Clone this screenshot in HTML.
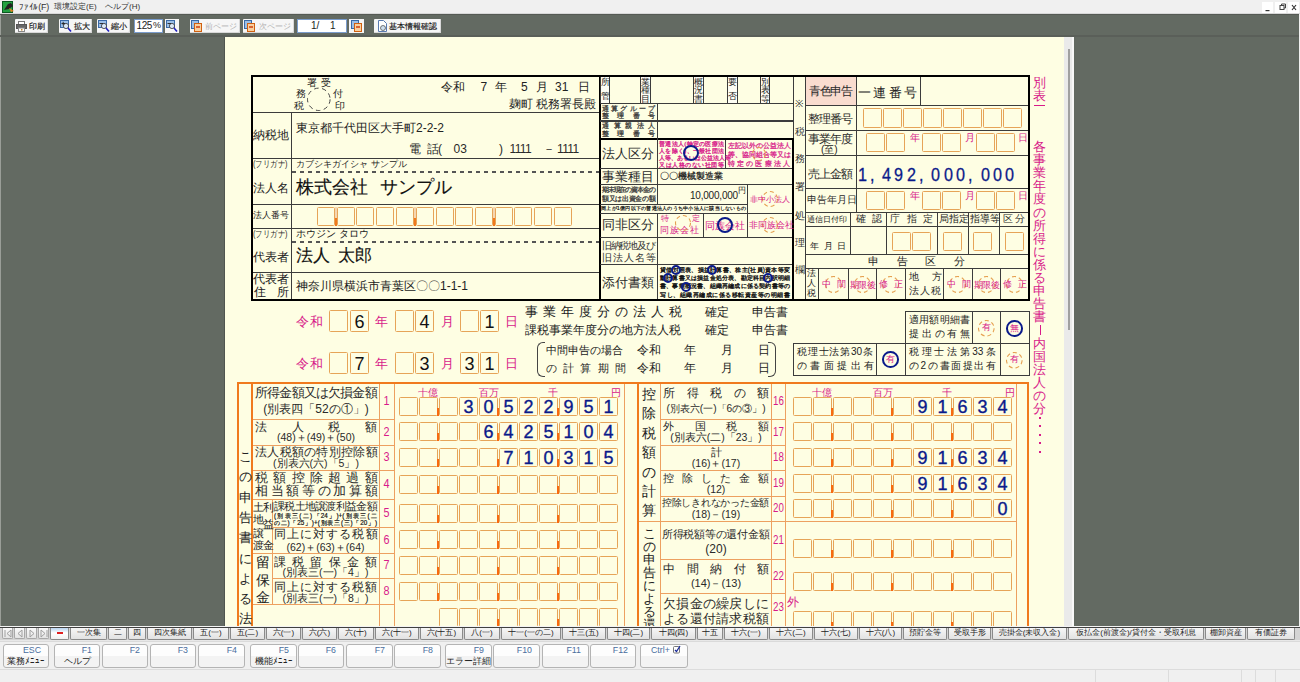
<!DOCTYPE html><html><head><meta charset="utf-8"><style>
html,body{margin:0;padding:0;width:1300px;height:682px;overflow:hidden;background:#f0f0f0;position:relative}
div,span{position:absolute;box-sizing:border-box}
span{font-family:"Liberation Sans",sans-serif;white-space:nowrap;line-height:1}
</style></head><body>
<div style="left:0px;top:0px;width:1300px;height:14px;background:#f0f0f0"></div>
<div style="left:0px;top:14px;width:1300px;height:612px;background:#636a62"></div>
<div style="left:1299px;top:14px;width:1px;height:612px;background:#f0f0f0"></div>
<div style="left:0px;top:14px;width:1px;height:612px;background:#9a9e98"></div>
<svg style="position:absolute;left:2px;top:1px" width="13" height="12" viewBox="0 0 13 12"><rect x="0.5" y="0.5" width="10" height="11" fill="#22a040" stroke="#0a5a20"/><path d="M2 9 L6 3 L9 2 L11 5 L7 8 Z" fill="#222"/><path d="M7 7 L12 10 L9 11 Z" fill="#e08020"/></svg>
<span style="left:19px;top:2.5px;font-size:9px;color:#333;letter-spacing:-0.2px">ﾌｧｲﾙ(F)</span>
<span style="left:54px;top:2.5px;font-size:8px;color:#333;">環境設定(E)</span>
<span style="left:105px;top:2.5px;font-size:8px;color:#333;">ヘルプ(H)</span>
<div style="left:0px;top:13px;width:1300px;height:1px;background:#d8d8d8"></div>
<div style="left:0px;top:14px;width:1299px;height:1px;background:#555a54"></div>
<div style="left:0px;top:35px;width:1299px;height:2px;background:#5a5f59"></div>
<div style="left:1262px;top:2px;width:11px;height:11px;background:#fff"></div>
<div style="left:1275px;top:2px;width:11px;height:11px;background:#fff"></div>
<div style="left:1288px;top:2px;width:11px;height:11px;background:#fff"></div>
<svg style="position:absolute;left:1262px;top:2px" width="37" height="11" viewBox="0 0 37 11"><rect x="3.5" y="8" width="4" height="1.2" fill="#333"/><rect x="18" y="3.5" width="4" height="4" fill="none" stroke="#444" stroke-width="1"/><path d="M19.5 3.5 V2 H23.5 V6 H22" fill="none" stroke="#444" stroke-width="1"/><path d="M30 3 L34 8 M34 3 L30 8" stroke="#333" stroke-width="1.2"/></svg>
<div style="left:15px;top:19px;width:33px;height:14px;background:#f6f6f6;border-radius:1px;box-shadow:inset -1px -1px 0 #d8d8d8"></div>
<svg style="position:absolute;left:16px;top:21px" width="11" height="11" viewBox="0 0 11 11"><rect x="2.5" y="0.5" width="6" height="3" fill="#fff" stroke="#777"/><rect x="0.5" y="3.5" width="10" height="4" fill="#666" stroke="#555"/><rect x="2.5" y="7" width="6" height="3.5" fill="#fff" stroke="#888"/><rect x="5" y="8" width="1.5" height="1.5" fill="#c08020"/></svg>
<span style="left:29px;top:22px;font-size:8.4px;color:#111;-webkit-text-stroke:0.15px #111">印刷</span>
<div style="left:59px;top:19px;width:33px;height:14px;background:#f6f6f6;border-radius:1px;box-shadow:inset -1px -1px 0 #d8d8d8"></div>
<svg style="position:absolute;left:60px;top:20px" width="12" height="12" viewBox="0 0 12 12"><rect x="0.5" y="0.5" width="8" height="7" fill="#9cc0e8" stroke="#3a6aa8"/><circle cx="6" cy="6" r="2.6" fill="#dbe9f8" stroke="#333" stroke-width="0.8"/><path d="M8 8 L11 11.5" stroke="#2020c0" stroke-width="1.6"/><path d="M1.5 3.5 H5 M3.2 1.8 V5.2" stroke="#222" stroke-width="0.9"/></svg>
<span style="left:74px;top:22px;font-size:8.4px;color:#111;-webkit-text-stroke:0.15px #111">拡大</span>
<div style="left:97px;top:19px;width:33px;height:14px;background:#f6f6f6;border-radius:1px;box-shadow:inset -1px -1px 0 #d8d8d8"></div>
<svg style="position:absolute;left:98px;top:20px" width="12" height="12" viewBox="0 0 12 12"><rect x="0.5" y="0.5" width="8" height="7" fill="#9cc0e8" stroke="#3a6aa8"/><circle cx="6" cy="6" r="2.6" fill="#dbe9f8" stroke="#333" stroke-width="0.8"/><path d="M8 8 L11 11.5" stroke="#2020c0" stroke-width="1.6"/><path d="M1.5 3.5 H5" stroke="#222" stroke-width="0.9"/></svg>
<span style="left:111px;top:22px;font-size:8.4px;color:#111;-webkit-text-stroke:0.15px #111">縮小</span>
<div style="left:134px;top:19px;width:29px;height:14px;background:#fff;box-shadow:inset 0 0 0 1px #7a9ccc"></div>
<span style="left:136.5px;top:21px;font-size:10px;color:#222;letter-spacing:-0.4px">125</span>
<span style="left:153px;top:21px;font-size:9px;color:#222;">%</span>
<div style="left:165px;top:19px;width:14px;height:14px;background:#f6f6f6"></div>
<svg style="position:absolute;left:166px;top:20px" width="12" height="12" viewBox="0 0 12 12"><rect x="0.5" y="0.5" width="8" height="7" fill="#9cc0e8" stroke="#3a6aa8"/><circle cx="6" cy="6" r="2.6" fill="#dbe9f8" stroke="#333" stroke-width="0.8"/><path d="M8 8 L11 11.5" stroke="#2020c0" stroke-width="1.6"/><path d="M1.5 3.5 H5" stroke="#222" stroke-width="0.9"/></svg>
<div style="left:190px;top:19px;width:50px;height:14px;background:#f6f6f6;border-radius:1px;box-shadow:inset -1px -1px 0 #d8d8d8"></div>
<svg style="position:absolute;left:191px;top:20px" width="12" height="12" viewBox="0 0 12 12"><rect x="0.5" y="0.5" width="7" height="8" fill="#9cc0e8" stroke="#3a6aa8"/><rect x="3.5" y="3.5" width="7" height="8" fill="#f8d0a0" stroke="#d06010"/><path d="M5 7 H9" stroke="#d04010" stroke-width="1.5"/></svg>
<span style="left:205px;top:22px;font-size:8.4px;color:#b0b0b0;">前ページ</span>
<div style="left:243px;top:19px;width:51px;height:14px;background:#f6f6f6;border-radius:1px;box-shadow:inset -1px -1px 0 #d8d8d8"></div>
<svg style="position:absolute;left:244px;top:20px" width="12" height="12" viewBox="0 0 12 12"><rect x="0.5" y="0.5" width="7" height="8" fill="#9cc0e8" stroke="#3a6aa8"/><rect x="3.5" y="3.5" width="7" height="8" fill="#f8d0a0" stroke="#d06010"/><path d="M5 7 H9" stroke="#d04010" stroke-width="1.5"/></svg>
<span style="left:259px;top:22px;font-size:8.4px;color:#b0b0b0;">次ページ</span>
<div style="left:297px;top:19px;width:50px;height:14px;background:#fff;box-shadow:inset 0 0 0 1px #7a9ccc"></div>
<span style="left:311px;top:21px;font-size:10px;color:#222;">1/</span>
<span style="left:330px;top:21px;font-size:10px;color:#222;">1</span>
<div style="left:349px;top:19px;width:15px;height:14px;background:#f6f6f6"></div>
<svg style="position:absolute;left:351px;top:20px" width="12" height="12" viewBox="0 0 12 12"><rect x="0.5" y="0.5" width="7" height="8" fill="#9cc0e8" stroke="#3a6aa8"/><rect x="3.5" y="3.5" width="7" height="8" fill="#f8d0a0" stroke="#d06010"/><path d="M5 7 H9" stroke="#d04010" stroke-width="1.5"/></svg>
<div style="left:374px;top:19px;width:67px;height:14px;background:#f6f6f6;border-radius:1px;box-shadow:inset -1px -1px 0 #d8d8d8"></div>
<svg style="position:absolute;left:377px;top:20px" width="11" height="12" viewBox="0 0 11 12"><path d="M1.5 0.5 H6.5 L9.5 3.5 V11.5 H1.5 Z" fill="#fff" stroke="#5a7ab0"/><circle cx="6" cy="8" r="2.5" fill="#cfe0f0" stroke="#444" stroke-width="0.7"/></svg>
<span style="left:389px;top:22px;font-size:8.4px;color:#111;-webkit-text-stroke:0.15px #111">基本情報確認</span>
<div style="left:224px;top:37px;width:1px;height:589px;background:#50554f"></div>
<div style="left:225px;top:37px;width:839px;height:589px;background:#fefee3"></div>
<div style="left:1064px;top:37px;width:10px;height:589px;background:#eaeaea"></div>
<div style="left:1072px;top:37px;width:2px;height:589px;background:#f8f8f8"></div>
<div style="left:1068px;top:49px;width:2px;height:281px;background:#a0a0a0"></div>
<div style="left:251px;top:75px;width:350px;height:226px;border:2px solid #000"></div>
<svg style="position:absolute;left:306px;top:87px" width="26" height="25"><ellipse cx="12.8" cy="12.3" rx="11.3" ry="11.2" fill="none" stroke="#444" stroke-width="1" stroke-dasharray="4.5 3.5"/></svg>
<span style="left:306.5px;top:77.5px;font-size:9.5px;color:#222;">署</span>
<span style="left:321px;top:77.5px;font-size:9.5px;color:#222;">受</span>
<span style="left:296px;top:88.5px;font-size:9.5px;color:#222;">務</span>
<span style="left:332.5px;top:88.5px;font-size:9.5px;color:#222;">付</span>
<span style="left:294px;top:100.5px;font-size:9.5px;color:#222;">税</span>
<span style="left:334.5px;top:100.5px;font-size:9.5px;color:#222;">印</span>
<span style="left:441px;top:81px;font-size:12px;color:#222;">令和</span>
<span style="left:480.5px;top:81px;font-size:12px;color:#222;">7</span>
<span style="left:494.5px;top:81px;font-size:12px;color:#222;">年</span>
<span style="left:521px;top:81px;font-size:12px;color:#222;">5</span>
<span style="left:535.5px;top:81px;font-size:12px;color:#222;">月</span>
<span style="left:555px;top:81px;font-size:12px;color:#222;">31</span>
<span style="left:578px;top:81px;font-size:12px;color:#222;">日</span>
<span style="right:704px;top:98px;font-size:12px;color:#2a2a2a;">麹町&nbsp;税務署長殿</span>
<div style="left:253px;top:112px;width:346px;height:1px;background:#3c3c3c"></div>
<div style="left:291px;top:112px;width:1px;height:187px;background:#3c3c3c"></div>
<span style="left:253px;top:129px;font-size:12px;color:#222;">納税地</span>
<span style="left:296px;top:122px;font-size:12px;color:#222;">東京都千代田区大手町2-2-2</span>
<span style="left:409px;top:143px;font-size:12px;color:#2a2a2a;">電</span>
<span style="left:427px;top:143px;font-size:12px;color:#2a2a2a;">話</span>
<span style="left:438px;top:143px;font-size:12px;color:#2a2a2a;">(</span>
<span style="left:453.5px;top:143px;font-size:12px;color:#2a2a2a;">03</span>
<span style="left:499px;top:143px;font-size:12px;color:#2a2a2a;">)</span>
<span style="left:509.5px;top:143px;font-size:12px;color:#2a2a2a;letter-spacing:-0.6px">1111</span>
<span style="left:543px;top:143px;font-size:12px;color:#2a2a2a;">－</span>
<span style="left:557px;top:143px;font-size:12px;color:#2a2a2a;letter-spacing:-0.6px">1111</span>
<div style="left:253px;top:158px;width:346px;height:1px;background:#3c3c3c"></div>
<span style="left:253px;top:160px;font-size:9px;color:#2a2a2a;transform:scaleX(0.82);transform-origin:0 0">(フリガナ)</span>
<span style="left:296px;top:160px;font-size:9.2px;color:#222;">カブシキガイシャ&nbsp;サンプル</span>
<div style="left:292px;top:171px;width:307px;height:1.5px;background:repeating-linear-gradient(90deg,#555 0 4px,transparent 4px 8px)"></div>
<span style="left:253px;top:182px;font-size:12px;color:#222;">法人名</span>
<span style="left:296px;top:178px;font-size:18px;color:#111;-webkit-text-stroke:0.15px #111">株式会社</span>
<span style="left:380px;top:178px;font-size:18px;color:#111;-webkit-text-stroke:0.15px #111">サンプル</span>
<div style="left:253px;top:204px;width:346px;height:1px;background:#3c3c3c"></div>
<span style="left:253px;top:210.5px;font-size:9.3px;color:#222;">法人番号</span>
<div style="left:317px;top:207px;width:18px;height:19px;border:1.2px solid #e6a458;border-radius:1.5px"></div>
<div style="left:337px;top:207px;width:18px;height:19px;border:1.2px solid #e6a458;border-radius:1.5px"></div>
<div style="left:356px;top:207px;width:18px;height:19px;border:1.2px solid #e6a458;border-radius:1.5px"></div>
<div style="left:376px;top:207px;width:18px;height:19px;border:1.2px solid #e6a458;border-radius:1.5px"></div>
<div style="left:396px;top:207px;width:18px;height:19px;border:1.2px solid #e6a458;border-radius:1.5px"></div>
<div style="left:416px;top:207px;width:18px;height:19px;border:1.2px solid #e6a458;border-radius:1.5px"></div>
<div style="left:436px;top:207px;width:18px;height:19px;border:1.2px solid #e6a458;border-radius:1.5px"></div>
<div style="left:455px;top:207px;width:18px;height:19px;border:1.2px solid #e6a458;border-radius:1.5px"></div>
<div style="left:475px;top:207px;width:18px;height:19px;border:1.2px solid #e6a458;border-radius:1.5px"></div>
<div style="left:495px;top:207px;width:18px;height:19px;border:1.2px solid #e6a458;border-radius:1.5px"></div>
<div style="left:514px;top:207px;width:18px;height:19px;border:1.2px solid #e6a458;border-radius:1.5px"></div>
<div style="left:534px;top:207px;width:18px;height:19px;border:1.2px solid #e6a458;border-radius:1.5px"></div>
<div style="left:554px;top:207px;width:18px;height:19px;border:1.2px solid #e6a458;border-radius:1.5px"></div>
<div style="left:335px;top:207px;width:2px;height:19px;background:#f5d6b0"></div>
<div style="left:335px;top:218px;width:2px;height:8px;background:#f07a1e"></div>
<div style="left:414px;top:207px;width:2px;height:19px;background:#f5d6b0"></div>
<div style="left:414px;top:218px;width:2px;height:8px;background:#f07a1e"></div>
<div style="left:493px;top:207px;width:2px;height:19px;background:#f5d6b0"></div>
<div style="left:493px;top:218px;width:2px;height:8px;background:#f07a1e"></div>
<div style="left:253px;top:228px;width:346px;height:1px;background:#3c3c3c"></div>
<span style="left:253px;top:229.5px;font-size:9px;color:#2a2a2a;transform:scaleX(0.82);transform-origin:0 0">(フリガナ)</span>
<span style="left:296px;top:229px;font-size:9.5px;color:#222;">ホウジン&nbsp;タロウ</span>
<div style="left:292px;top:241px;width:307px;height:1.5px;background:repeating-linear-gradient(90deg,#555 0 4px,transparent 4px 8px)"></div>
<span style="left:253px;top:251px;font-size:12px;color:#222;">代表者</span>
<span style="left:296px;top:247px;font-size:17px;color:#111;-webkit-text-stroke:0.15px #111">法人</span>
<span style="left:338px;top:247px;font-size:17px;color:#111;-webkit-text-stroke:0.15px #111">太郎</span>
<div style="left:253px;top:272px;width:346px;height:1px;background:#3c3c3c"></div>
<span style="left:253px;top:273px;font-size:12px;color:#222;">代表者</span>
<span style="left:254px;top:286px;font-size:12px;color:#222;">住</span>
<span style="left:277px;top:286px;font-size:12px;color:#222;">所</span>
<span style="left:296px;top:280px;font-size:12px;color:#222;">神奈川県横浜市青葉区〇〇1-1-1</span>
<div style="left:600px;top:77px;width:10px;height:26px;background:#fdfdf4;border-left:1px solid #3c3c3c;border-right:1px solid #3c3c3c"></div>
<span style="left:601px;top:78px;font-size:9px;color:#222;">所</span>
<span style="left:601px;top:92px;font-size:9px;color:#222;">管</span>
<div style="left:640px;top:77px;width:11px;height:26px;background:#fdfdf4;border-left:1px solid #3c3c3c;border-right:1px solid #3c3c3c"></div>
<span style="left:641px;top:78.0px;font-size:9px;color:#222;">業</span>
<span style="left:641px;top:86.3px;font-size:9px;color:#222;">種</span>
<span style="left:641px;top:94.6px;font-size:9px;color:#222;">目</span>
<div style="left:693px;top:77px;width:11px;height:26px;background:#fdfdf4;border-left:1px solid #3c3c3c;border-right:1px solid #3c3c3c"></div>
<span style="left:694px;top:78.0px;font-size:9px;color:#222;">概</span>
<span style="left:694px;top:86.3px;font-size:9px;color:#222;">況</span>
<span style="left:694px;top:94.6px;font-size:9px;color:#222;">書</span>
<div style="left:727px;top:77px;width:11px;height:26px;background:#fdfdf4;border-left:1px solid #3c3c3c;border-right:1px solid #3c3c3c"></div>
<span style="left:728px;top:78px;font-size:9px;color:#222;">要</span>
<span style="left:728px;top:92px;font-size:9px;color:#222;">否</span>
<div style="left:760px;top:77px;width:10px;height:26px;background:#fdfdf4;border-left:1px solid #3c3c3c;border-right:1px solid #3c3c3c"></div>
<span style="left:761px;top:78.0px;font-size:9px;color:#222;">別</span>
<span style="left:761px;top:86.3px;font-size:9px;color:#222;">表</span>
<span style="left:761px;top:94.6px;font-size:9px;color:#222;">等</span>
<div style="left:600px;top:103px;width:193px;height:1px;background:#3c3c3c"></div>
<div style="left:657px;top:103px;width:1px;height:35px;background:#3c3c3c"></div>
<div style="left:600px;top:120px;width:193px;height:2px;background:#3c3c3c"></div>
<div style="left:600px;top:138px;width:193px;height:2px;background:#000"></div>
<span style="left:602.0px;top:105px;font-size:7px;color:#333;;-webkit-text-stroke:0.25px #333">通</span>
<span style="left:611.2px;top:105px;font-size:7px;color:#333;;-webkit-text-stroke:0.25px #333">算</span>
<span style="left:620.4px;top:105px;font-size:7px;color:#333;;-webkit-text-stroke:0.25px #333">グ</span>
<span style="left:629.6px;top:105px;font-size:7px;color:#333;;-webkit-text-stroke:0.25px #333">ル</span>
<span style="left:638.8px;top:105px;font-size:7px;color:#333;;-webkit-text-stroke:0.25px #333">ー</span>
<span style="left:648.0px;top:105px;font-size:7px;color:#333;;-webkit-text-stroke:0.25px #333">プ</span>
<span style="left:602.0px;top:112px;font-size:7px;color:#333;;-webkit-text-stroke:0.25px #333">整</span>
<span style="left:617.3px;top:112px;font-size:7px;color:#333;;-webkit-text-stroke:0.25px #333">理</span>
<span style="left:632.7px;top:112px;font-size:7px;color:#333;;-webkit-text-stroke:0.25px #333">番</span>
<span style="left:648.0px;top:112px;font-size:7px;color:#333;;-webkit-text-stroke:0.25px #333">号</span>
<span style="left:602.0px;top:122px;font-size:7px;color:#333;;-webkit-text-stroke:0.25px #333">通</span>
<span style="left:613.5px;top:122px;font-size:7px;color:#333;;-webkit-text-stroke:0.25px #333">算</span>
<span style="left:625.0px;top:122px;font-size:7px;color:#333;;-webkit-text-stroke:0.25px #333">親</span>
<span style="left:636.5px;top:122px;font-size:7px;color:#333;;-webkit-text-stroke:0.25px #333">法</span>
<span style="left:648.0px;top:122px;font-size:7px;color:#333;;-webkit-text-stroke:0.25px #333">人</span>
<span style="left:602.0px;top:130px;font-size:7px;color:#333;;-webkit-text-stroke:0.25px #333">整</span>
<span style="left:617.3px;top:130px;font-size:7px;color:#333;;-webkit-text-stroke:0.25px #333">理</span>
<span style="left:632.7px;top:130px;font-size:7px;color:#333;;-webkit-text-stroke:0.25px #333">番</span>
<span style="left:648.0px;top:130px;font-size:7px;color:#333;;-webkit-text-stroke:0.25px #333">号</span>
<div style="left:793px;top:77px;width:1px;height:61px;background:#3c3c3c"></div>
<div style="left:792px;top:138px;width:2px;height:162px;background:#000"></div>
<span style="left:602.0px;top:147px;font-size:13px;color:#2a2a2a;">法</span>
<span style="left:615.0px;top:147px;font-size:13px;color:#2a2a2a;">人</span>
<span style="left:628.0px;top:147px;font-size:13px;color:#2a2a2a;">区</span>
<span style="left:641.0px;top:147px;font-size:13px;color:#2a2a2a;">分</span>
<div style="left:657px;top:138px;width:1px;height:66px;background:#3c3c3c"></div>
<div style="left:657px;top:213px;width:1px;height:87px;background:#3c3c3c"></div>
<div style="left:725px;top:140px;width:1px;height:28px;background:#3c3c3c"></div>
<span style="left:659px;top:141px;width:65px;font-size:6.2px;color:#d81b8a;-webkit-text-stroke:0.3px #d81b8a;text-align-last:justify;text-align:justify">普通法人(特定の医療法</span>
<span style="left:659px;top:148px;width:65px;font-size:6.2px;color:#d81b8a;-webkit-text-stroke:0.3px #d81b8a;text-align-last:justify;text-align:justify">人を除く)、一般社団法</span>
<span style="left:659px;top:155px;width:65px;font-size:6.2px;color:#d81b8a;-webkit-text-stroke:0.3px #d81b8a;text-align-last:justify;text-align:justify">人等、あるいは公益法人等</span>
<span style="left:659px;top:162px;width:65px;font-size:6.2px;color:#d81b8a;-webkit-text-stroke:0.3px #d81b8a;text-align-last:justify;text-align:justify">又は人格のない社団等</span>
<span style="left:728px;top:142px;width:62px;font-size:7.2px;color:#d81b8a;-webkit-text-stroke:0.25px #d81b8a;text-align-last:justify;text-align:justify">左記以外の公益法人</span>
<span style="left:728px;top:151px;width:62px;font-size:7.2px;color:#d81b8a;-webkit-text-stroke:0.25px #d81b8a;text-align-last:justify;text-align:justify">等、協同組合等又は</span>
<span style="left:728px;top:160px;width:62px;font-size:7.2px;color:#d81b8a;-webkit-text-stroke:0.25px #d81b8a;text-align-last:justify;text-align:justify">特定の医療法人</span>
<svg style="position:absolute;left:751px;top:146px" width="16" height="16"><circle cx="8" cy="8" r="6.5" fill="none" stroke="#e6a050" stroke-width="1.1" stroke-dasharray="4 3"/></svg>
<div style="left:683px;top:145px;width:16px;height:16px;border:2px solid #0a1a8a;border-radius:50%"></div>
<div style="left:600px;top:168px;width:192px;height:1px;background:#3c3c3c"></div>
<span style="left:602.0px;top:170px;font-size:13px;color:#2a2a2a;">事</span>
<span style="left:615.0px;top:170px;font-size:13px;color:#2a2a2a;">業</span>
<span style="left:628.0px;top:170px;font-size:13px;color:#2a2a2a;">種</span>
<span style="left:641.0px;top:170px;font-size:13px;color:#2a2a2a;">目</span>
<span style="left:660px;top:172px;font-size:9px;color:#111;-webkit-text-stroke:0.2px #111">〇〇機械製造業</span>
<div style="left:600px;top:184px;width:192px;height:1px;background:#3c3c3c"></div>
<span style="left:602.0px;top:187px;font-size:6.5px;color:#333;;-webkit-text-stroke:0.25px #333">期</span>
<span style="left:607.8px;top:187px;font-size:6.5px;color:#333;;-webkit-text-stroke:0.25px #333">末</span>
<span style="left:613.6px;top:187px;font-size:6.5px;color:#333;;-webkit-text-stroke:0.25px #333">現</span>
<span style="left:619.4px;top:187px;font-size:6.5px;color:#333;;-webkit-text-stroke:0.25px #333">在</span>
<span style="left:625.2px;top:187px;font-size:6.5px;color:#333;;-webkit-text-stroke:0.25px #333">の</span>
<span style="left:631.1px;top:187px;font-size:6.5px;color:#333;;-webkit-text-stroke:0.25px #333">資</span>
<span style="left:636.9px;top:187px;font-size:6.5px;color:#333;;-webkit-text-stroke:0.25px #333">本</span>
<span style="left:642.7px;top:187px;font-size:6.5px;color:#333;;-webkit-text-stroke:0.25px #333">金</span>
<span style="left:648.5px;top:187px;font-size:6.5px;color:#333;;-webkit-text-stroke:0.25px #333">の</span>
<span style="left:602.0px;top:196px;font-size:6.5px;color:#333;;-webkit-text-stroke:0.25px #333">額</span>
<span style="left:608.6px;top:196px;font-size:6.5px;color:#333;;-webkit-text-stroke:0.25px #333">又</span>
<span style="left:615.3px;top:196px;font-size:6.5px;color:#333;;-webkit-text-stroke:0.25px #333">は</span>
<span style="left:621.9px;top:196px;font-size:6.5px;color:#333;;-webkit-text-stroke:0.25px #333">出</span>
<span style="left:628.6px;top:196px;font-size:6.5px;color:#333;;-webkit-text-stroke:0.25px #333">資</span>
<span style="left:635.2px;top:196px;font-size:6.5px;color:#333;;-webkit-text-stroke:0.25px #333">金</span>
<span style="left:641.9px;top:196px;font-size:6.5px;color:#333;;-webkit-text-stroke:0.25px #333">の</span>
<span style="left:648.5px;top:196px;font-size:6.5px;color:#333;;-webkit-text-stroke:0.25px #333">額</span>
<div style="left:747px;top:184px;width:1px;height:53px;background:#3c3c3c"></div>
<span style="right:562px;top:191px;font-size:10px;color:#222;letter-spacing:-0.2px">10,000,000</span>
<span style="left:738px;top:187px;font-size:8px;color:#222;">円</span>
<div style="left:600px;top:204px;width:147px;height:1px;background:#3c3c3c"></div>
<span style="left:601px;top:205.5px;width:145px;font-size:5.4px;color:#111;text-align:justify;text-align-last:justify;-webkit-text-stroke:0.2px #111">同上が1億円以下の普通法人のうち中小法人に該当しないもの</span>
<svg style="position:absolute;left:761px;top:190px" width="18" height="18"><circle cx="9" cy="9" r="7.5" fill="none" stroke="#e6a050" stroke-width="1.1" stroke-dasharray="4 3"/></svg>
<span style="left:749.5px;top:195.5px;font-size:8.2px;color:#d81b8a;">非中小法人</span>
<div style="left:600px;top:213px;width:192px;height:1px;background:#3c3c3c"></div>
<span style="left:602.0px;top:218px;font-size:13px;color:#2a2a2a;">同</span>
<span style="left:615.0px;top:218px;font-size:13px;color:#2a2a2a;">非</span>
<span style="left:628.0px;top:218px;font-size:13px;color:#2a2a2a;">区</span>
<span style="left:641.0px;top:218px;font-size:13px;color:#2a2a2a;">分</span>
<div style="left:703px;top:213px;width:1px;height:24px;background:#3c3c3c"></div>
<span style="left:661px;top:215px;font-size:8px;color:#d81b8a;">特</span>
<span style="left:692px;top:215px;font-size:8px;color:#d81b8a;">定</span>
<span style="left:660px;top:226px;font-size:8.5px;color:#d81b8a;letter-spacing:1px">同族会社</span>
<svg style="position:absolute;left:674px;top:214px" width="18" height="18"><circle cx="9" cy="9" r="7.5" fill="none" stroke="#e6a050" stroke-width="1.1" stroke-dasharray="4 3"/></svg>
<span style="left:705px;top:221px;font-size:10px;color:#d81b8a;">同族会社</span>
<div style="left:717px;top:217px;width:16px;height:16px;border:2px solid #0a1a8a;border-radius:50%"></div>
<svg style="position:absolute;left:761px;top:216px" width="18" height="18"><circle cx="9" cy="9" r="7.5" fill="none" stroke="#e6a050" stroke-width="1.1" stroke-dasharray="4 3"/></svg>
<span style="left:749px;top:221px;font-size:8.6px;color:#d81b8a;">非同族会社</span>
<div style="left:600px;top:237px;width:192px;height:1px;background:#3c3c3c"></div>
<span style="left:602.0px;top:241px;font-size:9.5px;color:#333;">旧</span>
<span style="left:610.7px;top:241px;font-size:9.5px;color:#333;">納</span>
<span style="left:619.4px;top:241px;font-size:9.5px;color:#333;">税</span>
<span style="left:628.1px;top:241px;font-size:9.5px;color:#333;">地</span>
<span style="left:636.8px;top:241px;font-size:9.5px;color:#333;">及</span>
<span style="left:645.5px;top:241px;font-size:9.5px;color:#333;">び</span>
<span style="left:602.0px;top:253px;font-size:9.5px;color:#333;">旧</span>
<span style="left:612.9px;top:253px;font-size:9.5px;color:#333;">法</span>
<span style="left:623.8px;top:253px;font-size:9.5px;color:#333;">人</span>
<span style="left:634.6px;top:253px;font-size:9.5px;color:#333;">名</span>
<span style="left:645.5px;top:253px;font-size:9.5px;color:#333;">等</span>
<div style="left:600px;top:264px;width:192px;height:1px;background:#3c3c3c"></div>
<span style="left:602.0px;top:276px;font-size:13px;color:#2a2a2a;">添</span>
<span style="left:615.0px;top:276px;font-size:13px;color:#2a2a2a;">付</span>
<span style="left:628.0px;top:276px;font-size:13px;color:#2a2a2a;">書</span>
<span style="left:641.0px;top:276px;font-size:13px;color:#2a2a2a;">類</span>
<span style="left:660px;top:267.0px;width:130px;font-size:6.3px;color:#111;-webkit-text-stroke:0.3px #111;text-align-last:justify;text-align:justify">貸借対照表、損益計算書、株主(社員)資本等変</span>
<span style="left:660px;top:275.2px;width:130px;font-size:6.3px;color:#111;-webkit-text-stroke:0.3px #111;text-align-last:justify;text-align:justify">動計算書又は損益金処分表、勘定科目内訳明細</span>
<span style="left:660px;top:283.4px;width:130px;font-size:6.3px;color:#111;-webkit-text-stroke:0.3px #111;text-align-last:justify;text-align:justify">書、事業概況書、組織再編成に係る契約書等の</span>
<span style="left:660px;top:291.6px;width:130px;font-size:6.3px;color:#111;-webkit-text-stroke:0.3px #111;text-align-last:justify;text-align:justify">写し、組織再編成に係る移転資産等の明細書</span>
<div style="left:671px;top:265px;width:10px;height:10px;border:2px solid #0a1a8a;border-radius:50%"></div>
<div style="left:707px;top:265px;width:10px;height:10px;border:2px solid #0a1a8a;border-radius:50%"></div>
<div style="left:663px;top:273px;width:10px;height:10px;border:2px solid #0a1a8a;border-radius:50%"></div>
<div style="left:763px;top:273px;width:10px;height:10px;border:2px solid #0a1a8a;border-radius:50%"></div>
<div style="left:681px;top:282px;width:10px;height:10px;border:2px solid #0a1a8a;border-radius:50%"></div>
<div style="left:600px;top:75px;width:430px;height:2px;background:#000"></div>
<div style="left:600px;top:299px;width:430px;height:2px;background:#000"></div>
<div style="left:1028px;top:75px;width:2px;height:226px;background:#000"></div>
<div style="left:805px;top:77px;width:1px;height:222px;background:#3c3c3c"></div>
<span style="left:795px;top:98.5px;font-size:10px;color:#333;">※</span>
<span style="left:795px;top:126.5px;font-size:10px;color:#333;">税</span>
<span style="left:795px;top:154px;font-size:10px;color:#333;">務</span>
<span style="left:795px;top:181.5px;font-size:10px;color:#333;">署</span>
<span style="left:795px;top:210.5px;font-size:10px;color:#333;">処</span>
<span style="left:795px;top:237.5px;font-size:10px;color:#333;">理</span>
<span style="left:795px;top:265px;font-size:10px;color:#333;">欄</span>
<div style="left:806px;top:77px;width:50px;height:28px;background:#f9dccf"></div>
<span style="left:809.0px;top:85px;font-size:12px;color:#2a2a2a;">青</span>
<span style="left:819.7px;top:85px;font-size:12px;color:#2a2a2a;">色</span>
<span style="left:830.3px;top:85px;font-size:12px;color:#2a2a2a;">申</span>
<span style="left:841.0px;top:85px;font-size:12px;color:#2a2a2a;">告</span>
<div style="left:856px;top:77px;width:1px;height:135px;background:#3c3c3c"></div>
<div style="left:920px;top:77px;width:1px;height:28px;background:#3c3c3c"></div>
<span style="left:858.0px;top:85.5px;font-size:13px;color:#222;">一</span>
<span style="left:873.3px;top:85.5px;font-size:13px;color:#222;">連</span>
<span style="left:888.7px;top:85.5px;font-size:13px;color:#222;">番</span>
<span style="left:904.0px;top:85.5px;font-size:13px;color:#222;">号</span>
<div style="left:806px;top:105px;width:222px;height:1px;background:#3c3c3c"></div>
<span style="left:808.0px;top:113px;font-size:12px;color:#2a2a2a;">整</span>
<span style="left:819.0px;top:113px;font-size:12px;color:#2a2a2a;">理</span>
<span style="left:830.0px;top:113px;font-size:12px;color:#2a2a2a;">番</span>
<span style="left:841.0px;top:113px;font-size:12px;color:#2a2a2a;">号</span>
<div style="left:863px;top:108px;width:19px;height:20px;border:1.2px solid #e6a458;border-radius:1.5px"></div>
<div style="left:883px;top:108px;width:19px;height:20px;border:1.2px solid #e6a458;border-radius:1.5px"></div>
<div style="left:903px;top:108px;width:19px;height:20px;border:1.2px solid #e6a458;border-radius:1.5px"></div>
<div style="left:923px;top:108px;width:19px;height:20px;border:1.2px solid #e6a458;border-radius:1.5px"></div>
<div style="left:943px;top:108px;width:19px;height:20px;border:1.2px solid #e6a458;border-radius:1.5px"></div>
<div style="left:963px;top:108px;width:19px;height:20px;border:1.2px solid #e6a458;border-radius:1.5px"></div>
<div style="left:983px;top:108px;width:19px;height:20px;border:1.2px solid #e6a458;border-radius:1.5px"></div>
<div style="left:1003px;top:108px;width:19px;height:20px;border:1.2px solid #e6a458;border-radius:1.5px"></div>
<div style="left:806px;top:130px;width:222px;height:1px;background:#3c3c3c"></div>
<span style="left:808.0px;top:132.5px;font-size:12px;color:#2a2a2a;">事</span>
<span style="left:819.0px;top:132.5px;font-size:12px;color:#2a2a2a;">業</span>
<span style="left:830.0px;top:132.5px;font-size:12px;color:#2a2a2a;">年</span>
<span style="left:841.0px;top:132.5px;font-size:12px;color:#2a2a2a;">度</span>
<span style="left:821px;top:144.5px;font-size:10px;color:#222;">(至)</span>
<div style="left:866px;top:133px;width:19px;height:19px;border:1.2px solid #e6a458;border-radius:1.5px"></div>
<div style="left:886px;top:133px;width:19px;height:19px;border:1.2px solid #e6a458;border-radius:1.5px"></div>
<div style="left:922px;top:133px;width:19px;height:19px;border:1.2px solid #e6a458;border-radius:1.5px"></div>
<div style="left:942px;top:133px;width:19px;height:19px;border:1.2px solid #e6a458;border-radius:1.5px"></div>
<div style="left:976px;top:133px;width:19px;height:19px;border:1.2px solid #e6a458;border-radius:1.5px"></div>
<div style="left:996px;top:133px;width:19px;height:19px;border:1.2px solid #e6a458;border-radius:1.5px"></div>
<span style="left:909.5px;top:132.5px;font-size:9.5px;color:#d81b8a;">年</span>
<span style="left:964.5px;top:132.5px;font-size:9.5px;color:#d81b8a;">月</span>
<span style="left:1017.5px;top:132.5px;font-size:9.5px;color:#d81b8a;">日</span>
<div style="left:806px;top:155px;width:222px;height:1px;background:#3c3c3c"></div>
<span style="left:808.0px;top:168px;font-size:12px;color:#2a2a2a;">売</span>
<span style="left:819.0px;top:168px;font-size:12px;color:#2a2a2a;">上</span>
<span style="left:830.0px;top:168px;font-size:12px;color:#2a2a2a;">金</span>
<span style="left:841.0px;top:168px;font-size:12px;color:#2a2a2a;">額</span>
<span style="left:857.5px;top:165px;font-size:19px;color:#0a1a8a;transform:scaleX(0.85);transform-origin:0 0;-webkit-text-stroke:0.3px #0a1a8a">1</span>
<span style="left:869.8px;top:165px;font-size:19px;color:#0a1a8a;transform:scaleX(0.85);transform-origin:0 0;-webkit-text-stroke:0.3px #0a1a8a">,</span>
<span style="left:882.1px;top:165px;font-size:19px;color:#0a1a8a;transform:scaleX(0.85);transform-origin:0 0;-webkit-text-stroke:0.3px #0a1a8a">4</span>
<span style="left:894.4px;top:165px;font-size:19px;color:#0a1a8a;transform:scaleX(0.85);transform-origin:0 0;-webkit-text-stroke:0.3px #0a1a8a">9</span>
<span style="left:906.7px;top:165px;font-size:19px;color:#0a1a8a;transform:scaleX(0.85);transform-origin:0 0;-webkit-text-stroke:0.3px #0a1a8a">2</span>
<span style="left:919.0px;top:165px;font-size:19px;color:#0a1a8a;transform:scaleX(0.85);transform-origin:0 0;-webkit-text-stroke:0.3px #0a1a8a">,</span>
<span style="left:931.3px;top:165px;font-size:19px;color:#0a1a8a;transform:scaleX(0.85);transform-origin:0 0;-webkit-text-stroke:0.3px #0a1a8a">0</span>
<span style="left:943.6px;top:165px;font-size:19px;color:#0a1a8a;transform:scaleX(0.85);transform-origin:0 0;-webkit-text-stroke:0.3px #0a1a8a">0</span>
<span style="left:955.9px;top:165px;font-size:19px;color:#0a1a8a;transform:scaleX(0.85);transform-origin:0 0;-webkit-text-stroke:0.3px #0a1a8a">0</span>
<span style="left:968.2px;top:165px;font-size:19px;color:#0a1a8a;transform:scaleX(0.85);transform-origin:0 0;-webkit-text-stroke:0.3px #0a1a8a">,</span>
<span style="left:980.5px;top:165px;font-size:19px;color:#0a1a8a;transform:scaleX(0.85);transform-origin:0 0;-webkit-text-stroke:0.3px #0a1a8a">0</span>
<span style="left:992.8px;top:165px;font-size:19px;color:#0a1a8a;transform:scaleX(0.85);transform-origin:0 0;-webkit-text-stroke:0.3px #0a1a8a">0</span>
<span style="left:1005.1px;top:165px;font-size:19px;color:#0a1a8a;transform:scaleX(0.85);transform-origin:0 0;-webkit-text-stroke:0.3px #0a1a8a">0</span>
<div style="left:806px;top:188px;width:222px;height:1px;background:#3c3c3c"></div>
<span style="left:807px;top:195px;font-size:9.8px;color:#2a2a2a;letter-spacing:0.1px">申告年月日</span>
<div style="left:866px;top:191px;width:19px;height:19px;border:1.2px solid #e6a458;border-radius:1.5px"></div>
<div style="left:886px;top:191px;width:19px;height:19px;border:1.2px solid #e6a458;border-radius:1.5px"></div>
<div style="left:922px;top:191px;width:19px;height:19px;border:1.2px solid #e6a458;border-radius:1.5px"></div>
<div style="left:942px;top:191px;width:19px;height:19px;border:1.2px solid #e6a458;border-radius:1.5px"></div>
<div style="left:976px;top:191px;width:19px;height:19px;border:1.2px solid #e6a458;border-radius:1.5px"></div>
<div style="left:996px;top:191px;width:19px;height:19px;border:1.2px solid #e6a458;border-radius:1.5px"></div>
<span style="left:909.5px;top:190.5px;font-size:9.5px;color:#d81b8a;">年</span>
<span style="left:964.5px;top:190.5px;font-size:9.5px;color:#d81b8a;">月</span>
<span style="left:1017.5px;top:190.5px;font-size:9.5px;color:#d81b8a;">日</span>
<div style="left:806px;top:212px;width:222px;height:1px;background:#3c3c3c"></div>
<div style="left:850px;top:212px;width:1px;height:42px;background:#3c3c3c"></div>
<div style="left:886px;top:212px;width:1px;height:42px;background:#3c3c3c"></div>
<div style="left:937px;top:212px;width:1px;height:42px;background:#3c3c3c"></div>
<div style="left:968px;top:212px;width:1px;height:42px;background:#3c3c3c"></div>
<div style="left:999px;top:212px;width:1px;height:42px;background:#3c3c3c"></div>
<span style="left:807px;top:215px;font-size:8.3px;color:#222;">通信日付印</span>
<span style="left:856.0px;top:214px;font-size:10px;color:#2a2a2a;">確</span>
<span style="left:872.0px;top:214px;font-size:10px;color:#2a2a2a;">認</span>
<span style="left:890.0px;top:214px;font-size:10px;color:#2a2a2a;">庁</span>
<span style="left:906.5px;top:214px;font-size:10px;color:#2a2a2a;">指</span>
<span style="left:923.0px;top:214px;font-size:10px;color:#2a2a2a;">定</span>
<span style="left:939px;top:214px;font-size:9.7px;color:#222;">局指定</span>
<span style="left:970px;top:214px;font-size:9.7px;color:#222;">指導等</span>
<span style="left:1003.0px;top:214px;font-size:10px;color:#2a2a2a;">区</span>
<span style="left:1015.0px;top:214px;font-size:10px;color:#2a2a2a;">分</span>
<div style="left:806px;top:226px;width:222px;height:1px;background:#3c3c3c"></div>
<span style="left:810px;top:242px;font-size:8.5px;color:#222;">年&nbsp;&nbsp;月&nbsp;&nbsp;日</span>
<div style="left:892px;top:232px;width:19px;height:19px;border:1.2px solid #e6a458;border-radius:1.5px"></div>
<div style="left:912px;top:232px;width:19px;height:19px;border:1.2px solid #e6a458;border-radius:1.5px"></div>
<div style="left:943px;top:232px;width:19px;height:19px;border:1.2px solid #e6a458;border-radius:1.5px"></div>
<div style="left:973px;top:232px;width:19px;height:19px;border:1.2px solid #e6a458;border-radius:1.5px"></div>
<div style="left:1005px;top:232px;width:19px;height:19px;border:1.2px solid #e6a458;border-radius:1.5px"></div>
<div style="left:806px;top:254px;width:222px;height:1px;background:#3c3c3c"></div>
<span style="left:868.0px;top:256px;font-size:11px;color:#2a2a2a;">申</span>
<span style="left:896.7px;top:256px;font-size:11px;color:#2a2a2a;">告</span>
<span style="left:925.3px;top:256px;font-size:11px;color:#2a2a2a;">区</span>
<span style="left:954.0px;top:256px;font-size:11px;color:#2a2a2a;">分</span>
<div style="left:806px;top:268px;width:222px;height:1px;background:#3c3c3c"></div>
<div style="left:818px;top:268px;width:1px;height:31px;background:#3c3c3c"></div>
<div style="left:848px;top:268px;width:1px;height:31px;background:#3c3c3c"></div>
<div style="left:876px;top:268px;width:1px;height:31px;background:#3c3c3c"></div>
<div style="left:905px;top:268px;width:1px;height:31px;background:#3c3c3c"></div>
<div style="left:943px;top:268px;width:1px;height:31px;background:#3c3c3c"></div>
<div style="left:972px;top:268px;width:1px;height:31px;background:#3c3c3c"></div>
<div style="left:1000px;top:268px;width:1px;height:31px;background:#3c3c3c"></div>
<span style="left:807px;top:269px;font-size:9px;color:#222;">法</span>
<span style="left:807px;top:279px;font-size:9px;color:#222;">人</span>
<span style="left:807px;top:289px;font-size:9px;color:#222;">税</span>
<svg style="position:absolute;left:823.5px;top:274.5px" width="19.0" height="19.0"><circle cx="9.5" cy="9.5" r="8.0" fill="none" stroke="#e6a050" stroke-width="1.1" stroke-dasharray="4 3"/></svg>
<span style="left:821.5px;top:280px;font-size:9px;color:#d81b8a;">中</span>
<span style="left:836.5px;top:280px;font-size:9px;color:#d81b8a;">間</span>
<svg style="position:absolute;left:948.0px;top:274.5px" width="19.0" height="19.0"><circle cx="9.5" cy="9.5" r="8.0" fill="none" stroke="#e6a050" stroke-width="1.1" stroke-dasharray="4 3"/></svg>
<span style="left:946.5px;top:280px;font-size:9px;color:#d81b8a;">中</span>
<span style="left:961.5px;top:280px;font-size:9px;color:#d81b8a;">間</span>
<svg style="position:absolute;left:852.5px;top:274.5px" width="19.0" height="19.0"><circle cx="9.5" cy="9.5" r="8.0" fill="none" stroke="#e6a050" stroke-width="1.1" stroke-dasharray="4 3"/></svg>
<span style="left:849.5px;top:280.5px;font-size:8.6px;color:#d81b8a;letter-spacing:-0.2px">期限後</span>
<svg style="position:absolute;left:976.5px;top:274.5px" width="19.0" height="19.0"><circle cx="9.5" cy="9.5" r="8.0" fill="none" stroke="#e6a050" stroke-width="1.1" stroke-dasharray="4 3"/></svg>
<span style="left:973.5px;top:280.5px;font-size:8.6px;color:#d81b8a;letter-spacing:-0.2px">期限後</span>
<svg style="position:absolute;left:881.0px;top:274.5px" width="19.0" height="19.0"><circle cx="9.5" cy="9.5" r="8.0" fill="none" stroke="#e6a050" stroke-width="1.1" stroke-dasharray="4 3"/></svg>
<span style="left:879px;top:280px;font-size:9px;color:#d81b8a;">修</span>
<span style="left:893.5px;top:280px;font-size:9px;color:#d81b8a;">正</span>
<svg style="position:absolute;left:1004.5px;top:274.5px" width="19.0" height="19.0"><circle cx="9.5" cy="9.5" r="8.0" fill="none" stroke="#e6a050" stroke-width="1.1" stroke-dasharray="4 3"/></svg>
<span style="left:1003px;top:280px;font-size:9px;color:#d81b8a;">修</span>
<span style="left:1017.5px;top:280px;font-size:9px;color:#d81b8a;">正</span>
<span style="left:909px;top:272px;font-size:10px;color:#2a2a2a;">地</span>
<span style="left:931.5px;top:272px;font-size:10px;color:#2a2a2a;">方</span>
<span style="left:908.5px;top:286px;font-size:10px;color:#2a2a2a;letter-spacing:1.2px">法人税</span>
<span style="left:1033px;top:76px;font-size:13px;color:#d81b8a;">別</span>
<span style="left:1033px;top:89px;font-size:13px;color:#d81b8a;">表</span>
<div style="left:1034px;top:105px;width:11px;height:1.2px;background:#d81b8a"></div>
<span style="left:1033px;top:140.0px;font-size:13px;color:#d81b8a;">各</span>
<span style="left:1033px;top:153.1px;font-size:13px;color:#d81b8a;">事</span>
<span style="left:1033px;top:166.2px;font-size:13px;color:#d81b8a;">業</span>
<span style="left:1033px;top:179.3px;font-size:13px;color:#d81b8a;">年</span>
<span style="left:1033px;top:192.4px;font-size:13px;color:#d81b8a;">度</span>
<span style="left:1033px;top:205.5px;font-size:13px;color:#d81b8a;">の</span>
<span style="left:1033px;top:218.6px;font-size:13px;color:#d81b8a;">所</span>
<span style="left:1033px;top:231.7px;font-size:13px;color:#d81b8a;">得</span>
<span style="left:1033px;top:244.8px;font-size:13px;color:#d81b8a;">に</span>
<span style="left:1033px;top:257.9px;font-size:13px;color:#d81b8a;">係</span>
<span style="left:1033px;top:271.0px;font-size:13px;color:#d81b8a;">る</span>
<span style="left:1033px;top:284.1px;font-size:13px;color:#d81b8a;">申</span>
<span style="left:1033px;top:297.2px;font-size:13px;color:#d81b8a;">告</span>
<span style="left:1033px;top:310.29999999999995px;font-size:13px;color:#d81b8a;">書</span>
<div style="left:1039.5px;top:324.9px;width:1.2px;height:10px;background:#d81b8a"></div>
<span style="left:1033px;top:336.5px;font-size:13px;color:#d81b8a;">内</span>
<span style="left:1033px;top:349.6px;font-size:13px;color:#d81b8a;">国</span>
<span style="left:1033px;top:362.7px;font-size:13px;color:#d81b8a;">法</span>
<span style="left:1033px;top:375.79999999999995px;font-size:13px;color:#d81b8a;">人</span>
<span style="left:1033px;top:388.9px;font-size:13px;color:#d81b8a;">の</span>
<span style="left:1033px;top:402.0px;font-size:13px;color:#d81b8a;">分</span>
<div style="left:1039px;top:417.0px;width:2px;height:2px;background:#d81b8a"></div>
<div style="left:1039px;top:425.4px;width:2px;height:2px;background:#d81b8a"></div>
<div style="left:1039px;top:433.8px;width:2px;height:2px;background:#d81b8a"></div>
<div style="left:1039px;top:442.2px;width:2px;height:2px;background:#d81b8a"></div>
<div style="left:1039px;top:450.6px;width:2px;height:2px;background:#d81b8a"></div>
<span style="left:295.5px;top:314.5px;font-size:13px;color:#d81b8a;letter-spacing:1px">令和</span>
<div style="left:329px;top:310px;width:19px;height:22px;border:1.2px solid #e6a458;border-radius:1.5px"></div>
<div style="left:350px;top:310px;width:19px;height:22px;border:1.2px solid #e6a458;border-radius:1.5px"></div>
<span style="left:350px;top:312.5px;width:19px;text-align:center;font-size:18px;color:#111;">6</span>
<div style="left:395px;top:310px;width:19px;height:22px;border:1.2px solid #e6a458;border-radius:1.5px"></div>
<div style="left:415px;top:310px;width:19px;height:22px;border:1.2px solid #e6a458;border-radius:1.5px"></div>
<span style="left:415px;top:312.5px;width:19px;text-align:center;font-size:18px;color:#111;">4</span>
<div style="left:460px;top:310px;width:19px;height:22px;border:1.2px solid #e6a458;border-radius:1.5px"></div>
<div style="left:480px;top:310px;width:19px;height:22px;border:1.2px solid #e6a458;border-radius:1.5px"></div>
<span style="left:480px;top:312.5px;width:19px;text-align:center;font-size:18px;color:#111;">1</span>
<span style="left:375px;top:314.5px;font-size:13px;color:#d81b8a;">年</span>
<span style="left:440.5px;top:314.5px;font-size:13px;color:#d81b8a;">月</span>
<span style="left:504.5px;top:314.5px;font-size:13px;color:#d81b8a;">日</span>
<span style="left:295.5px;top:356.5px;font-size:13px;color:#d81b8a;letter-spacing:1px">令和</span>
<div style="left:329px;top:352px;width:19px;height:22px;border:1.2px solid #e6a458;border-radius:1.5px"></div>
<div style="left:350px;top:352px;width:19px;height:22px;border:1.2px solid #e6a458;border-radius:1.5px"></div>
<span style="left:350px;top:354.5px;width:19px;text-align:center;font-size:18px;color:#111;">7</span>
<div style="left:395px;top:352px;width:19px;height:22px;border:1.2px solid #e6a458;border-radius:1.5px"></div>
<div style="left:415px;top:352px;width:19px;height:22px;border:1.2px solid #e6a458;border-radius:1.5px"></div>
<span style="left:415px;top:354.5px;width:19px;text-align:center;font-size:18px;color:#111;">3</span>
<div style="left:460px;top:352px;width:19px;height:22px;border:1.2px solid #e6a458;border-radius:1.5px"></div>
<span style="left:460px;top:354.5px;width:19px;text-align:center;font-size:18px;color:#111;">3</span>
<div style="left:480px;top:352px;width:19px;height:22px;border:1.2px solid #e6a458;border-radius:1.5px"></div>
<span style="left:480px;top:354.5px;width:19px;text-align:center;font-size:18px;color:#111;">1</span>
<span style="left:375px;top:356.5px;font-size:13px;color:#d81b8a;">年</span>
<span style="left:440.5px;top:356.5px;font-size:13px;color:#d81b8a;">月</span>
<span style="left:504.5px;top:356.5px;font-size:13px;color:#d81b8a;">日</span>
<span style="left:525.0px;top:306px;font-size:12.5px;color:#222;">事</span>
<span style="left:542.9px;top:306px;font-size:12.5px;color:#222;">業</span>
<span style="left:560.9px;top:306px;font-size:12.5px;color:#222;">年</span>
<span style="left:578.8px;top:306px;font-size:12.5px;color:#222;">度</span>
<span style="left:596.8px;top:306px;font-size:12.5px;color:#222;">分</span>
<span style="left:614.7px;top:306px;font-size:12.5px;color:#222;">の</span>
<span style="left:632.6px;top:306px;font-size:12.5px;color:#222;">法</span>
<span style="left:650.6px;top:306px;font-size:12.5px;color:#222;">人</span>
<span style="left:668.5px;top:306px;font-size:12.5px;color:#222;">税</span>
<span style="left:525px;top:324px;font-size:12px;color:#222;">課税事業年度分の地方法人税</span>
<span style="left:705px;top:306px;font-size:12px;color:#222;">確定</span>
<span style="left:752px;top:306px;font-size:12px;color:#222;">申告書</span>
<span style="left:705px;top:324px;font-size:12px;color:#222;">確定</span>
<span style="left:752px;top:324px;font-size:12px;color:#222;">申告書</span>
<div style="left:537px;top:342px;width:8px;height:35px;border:1px solid #444;border-right:none;border-radius:6px 0 0 6px"></div>
<div style="left:768px;top:342px;width:8px;height:35px;border:1px solid #444;border-left:none;border-radius:0 6px 6px 0"></div>
<span style="left:546px;top:345px;font-size:11.4px;color:#222;">中間申告の場合</span>
<span style="left:637px;top:345px;font-size:11.5px;color:#222;">令和</span>
<span style="left:684px;top:345px;font-size:11.5px;color:#222;">年</span>
<span style="left:721px;top:345px;font-size:11.5px;color:#222;">月</span>
<span style="left:758px;top:345px;font-size:11.5px;color:#222;">日</span>
<span style="left:546.0px;top:363px;font-size:11.4px;color:#2a2a2a;">の</span>
<span style="left:563.1px;top:363px;font-size:11.4px;color:#2a2a2a;">計</span>
<span style="left:580.3px;top:363px;font-size:11.4px;color:#2a2a2a;">算</span>
<span style="left:597.5px;top:363px;font-size:11.4px;color:#2a2a2a;">期</span>
<span style="left:614.6px;top:363px;font-size:11.4px;color:#2a2a2a;">間</span>
<span style="left:637px;top:363px;font-size:11.5px;color:#222;">令和</span>
<span style="left:684px;top:363px;font-size:11.5px;color:#222;">年</span>
<span style="left:721px;top:363px;font-size:11.5px;color:#222;">月</span>
<span style="left:758px;top:363px;font-size:11.5px;color:#222;">日</span>
<div style="left:905px;top:311px;width:68px;height:33px;border:1px solid #3c3c3c"></div>
<div style="left:972px;top:311px;width:29px;height:33px;border:1px solid #3c3c3c"></div>
<div style="left:1000px;top:311px;width:30px;height:33px;border:1px solid #3c3c3c"></div>
<div style="left:793px;top:343px;width:84px;height:33px;border:1px solid #3c3c3c"></div>
<div style="left:876px;top:343px;width:30px;height:33px;border:1px solid #3c3c3c"></div>
<div style="left:905px;top:343px;width:96px;height:33px;border:1px solid #3c3c3c"></div>
<div style="left:1000px;top:343px;width:30px;height:33px;border:1px solid #3c3c3c"></div>
<span style="left:909.0px;top:315px;font-size:10px;color:#222;">適</span>
<span style="left:919.2px;top:315px;font-size:10px;color:#222;">用</span>
<span style="left:929.4px;top:315px;font-size:10px;color:#222;">額</span>
<span style="left:939.6px;top:315px;font-size:10px;color:#222;">明</span>
<span style="left:949.8px;top:315px;font-size:10px;color:#222;">細</span>
<span style="left:960.0px;top:315px;font-size:10px;color:#222;">書</span>
<span style="left:909.0px;top:329px;font-size:10px;color:#222;">提</span>
<span style="left:921.8px;top:329px;font-size:10px;color:#222;">出</span>
<span style="left:934.5px;top:329px;font-size:10px;color:#222;">の</span>
<span style="left:947.2px;top:329px;font-size:10px;color:#222;">有</span>
<span style="left:960.0px;top:329px;font-size:10px;color:#222;">無</span>
<svg style="position:absolute;left:976.7px;top:318.7px" width="18.6" height="18.6"><circle cx="9.3" cy="9.3" r="7.800000000000001" fill="none" stroke="#e6a050" stroke-width="1.1" stroke-dasharray="4 3"/></svg>
<span style="left:972px;top:323px;width:28px;text-align:center;font-size:9px;color:#d81b8a;">有</span>
<div style="left:1006.2px;top:320.2px;width:16.6px;height:16.6px;border:2px solid #0a1a8a;border-radius:50%"></div>
<span style="left:1000px;top:323.5px;width:29px;text-align:center;font-size:9px;color:#d81b8a;">無</span>
<span style="left:797px;top:347px;font-size:10px;color:#222;">税</span>
<span style="left:807.8px;top:347px;font-size:10px;color:#222;">理</span>
<span style="left:818.6px;top:347px;font-size:10px;color:#222;">士</span>
<span style="left:829.4px;top:347px;font-size:10px;color:#222;">法</span>
<span style="left:840.2px;top:347px;font-size:10px;color:#222;">第</span>
<span style="left:851.0px;top:347px;font-size:10px;color:#222;">30</span>
<span style="left:863.0px;top:347px;font-size:10px;color:#222;">条</span>
<span style="left:797.0px;top:361px;font-size:10px;color:#222;">の</span>
<span style="left:810.4px;top:361px;font-size:10px;color:#222;">書</span>
<span style="left:823.8px;top:361px;font-size:10px;color:#222;">面</span>
<span style="left:837.2px;top:361px;font-size:10px;color:#222;">提</span>
<span style="left:850.6px;top:361px;font-size:10px;color:#222;">出</span>
<span style="left:864.0px;top:361px;font-size:10px;color:#222;">有</span>
<div style="left:882.2px;top:351.2px;width:16.6px;height:16.6px;border:2px solid #0a1a8a;border-radius:50%"></div>
<span style="left:876px;top:354.5px;width:29px;text-align:center;font-size:9px;color:#d81b8a;">有</span>
<span style="left:909px;top:347px;font-size:10px;color:#222;">税</span>
<span style="left:921.6px;top:347px;font-size:10px;color:#222;">理</span>
<span style="left:934.3px;top:347px;font-size:10px;color:#222;">士</span>
<span style="left:946.9px;top:347px;font-size:10px;color:#222;">法</span>
<span style="left:959.5px;top:347px;font-size:10px;color:#222;">第</span>
<span style="left:972.2px;top:347px;font-size:10px;color:#222;">33</span>
<span style="left:986.0px;top:347px;font-size:10px;color:#222;">条</span>
<span style="left:909px;top:361px;font-size:10px;color:#222;">の</span>
<span style="left:920.6px;top:361px;font-size:10px;color:#222;">2</span>
<span style="left:927.9px;top:361px;font-size:10px;color:#222;">の</span>
<span style="left:939.5px;top:361px;font-size:10px;color:#222;">書</span>
<span style="left:951.1px;top:361px;font-size:10px;color:#222;">面</span>
<span style="left:962.7px;top:361px;font-size:10px;color:#222;">提</span>
<span style="left:974.4px;top:361px;font-size:10px;color:#222;">出</span>
<span style="left:986.0px;top:361px;font-size:10px;color:#222;">有</span>
<svg style="position:absolute;left:1005.2px;top:351.2px" width="18.6" height="18.6"><circle cx="9.3" cy="9.3" r="7.800000000000001" fill="none" stroke="#e6a050" stroke-width="1.1" stroke-dasharray="4 3"/></svg>
<span style="left:1000px;top:355px;width:29px;text-align:center;font-size:9px;color:#d81b8a;">有</span>
<div style="left:237px;top:382px;width:2px;height:244px;background:#f07a1e"></div>
<div style="left:251px;top:384px;width:2px;height:242px;background:#f07a1e"></div>
<div style="left:379px;top:384px;width:1px;height:242px;background:#eda060"></div>
<div style="left:394px;top:384px;width:1px;height:242px;background:#eda060"></div>
<div style="left:624px;top:384px;width:1px;height:242px;background:#eda060"></div>
<span style="left:417.5px;top:388px;font-size:9.5px;color:#d81b8a;">十億</span>
<span style="left:478.5px;top:388px;font-size:9.5px;color:#d81b8a;">百万</span>
<span style="left:547.5px;top:388px;font-size:9.5px;color:#d81b8a;">千</span>
<span style="left:610.5px;top:388px;font-size:9.5px;color:#d81b8a;">円</span>
<div style="left:253px;top:419px;width:141px;height:1px;background:#eda060"></div>
<span style="left:379px;top:393.5px;width:15px;text-align:center;font-size:13.5px;color:#d81b8a;transform:scaleX(0.8)">1</span>
<div style="left:399px;top:397px;width:19px;height:19px;border:1.2px solid #e6a458;border-radius:1.5px"></div>
<div style="left:419px;top:397px;width:19px;height:19px;border:1.2px solid #e6a458;border-radius:1.5px"></div>
<div style="left:439px;top:397px;width:19px;height:19px;border:1.2px solid #e6a458;border-radius:1.5px"></div>
<div style="left:459px;top:397px;width:19px;height:19px;border:1.2px solid #e6a458;border-radius:1.5px"></div>
<div style="left:479px;top:397px;width:19px;height:19px;border:1.2px solid #e6a458;border-radius:1.5px"></div>
<div style="left:499px;top:397px;width:19px;height:19px;border:1.2px solid #e6a458;border-radius:1.5px"></div>
<div style="left:519px;top:397px;width:19px;height:19px;border:1.2px solid #e6a458;border-radius:1.5px"></div>
<div style="left:539px;top:397px;width:19px;height:19px;border:1.2px solid #e6a458;border-radius:1.5px"></div>
<div style="left:559px;top:397px;width:19px;height:19px;border:1.2px solid #e6a458;border-radius:1.5px"></div>
<div style="left:579px;top:397px;width:19px;height:19px;border:1.2px solid #e6a458;border-radius:1.5px"></div>
<div style="left:599px;top:397px;width:19px;height:19px;border:1.2px solid #e6a458;border-radius:1.5px"></div>
<div style="left:436.8px;top:408px;width:2.6px;height:8px;background:#f86a10"></div>
<div style="left:496.8px;top:408px;width:2.6px;height:8px;background:#f86a10"></div>
<div style="left:556.8px;top:408px;width:2.6px;height:8px;background:#f86a10"></div>
<span style="left:459px;top:398px;width:19px;text-align:center;font-size:18px;color:#0a1a8a;-webkit-text-stroke:0.35px #0a1a8a">3</span>
<span style="left:479px;top:398px;width:19px;text-align:center;font-size:18px;color:#0a1a8a;-webkit-text-stroke:0.35px #0a1a8a">0</span>
<span style="left:499px;top:398px;width:19px;text-align:center;font-size:18px;color:#0a1a8a;-webkit-text-stroke:0.35px #0a1a8a">5</span>
<span style="left:519px;top:398px;width:19px;text-align:center;font-size:18px;color:#0a1a8a;-webkit-text-stroke:0.35px #0a1a8a">2</span>
<span style="left:539px;top:398px;width:19px;text-align:center;font-size:18px;color:#0a1a8a;-webkit-text-stroke:0.35px #0a1a8a">2</span>
<span style="left:559px;top:398px;width:19px;text-align:center;font-size:18px;color:#0a1a8a;-webkit-text-stroke:0.35px #0a1a8a">9</span>
<span style="left:579px;top:398px;width:19px;text-align:center;font-size:18px;color:#0a1a8a;-webkit-text-stroke:0.35px #0a1a8a">5</span>
<span style="left:599px;top:398px;width:19px;text-align:center;font-size:18px;color:#0a1a8a;-webkit-text-stroke:0.35px #0a1a8a">1</span>
<div style="left:253px;top:445px;width:141px;height:1px;background:#eda060"></div>
<span style="left:379px;top:424.5px;width:15px;text-align:center;font-size:13.5px;color:#d81b8a;transform:scaleX(0.8)">2</span>
<div style="left:399px;top:422px;width:19px;height:19px;border:1.2px solid #e6a458;border-radius:1.5px"></div>
<div style="left:419px;top:422px;width:19px;height:19px;border:1.2px solid #e6a458;border-radius:1.5px"></div>
<div style="left:439px;top:422px;width:19px;height:19px;border:1.2px solid #e6a458;border-radius:1.5px"></div>
<div style="left:459px;top:422px;width:19px;height:19px;border:1.2px solid #e6a458;border-radius:1.5px"></div>
<div style="left:479px;top:422px;width:19px;height:19px;border:1.2px solid #e6a458;border-radius:1.5px"></div>
<div style="left:499px;top:422px;width:19px;height:19px;border:1.2px solid #e6a458;border-radius:1.5px"></div>
<div style="left:519px;top:422px;width:19px;height:19px;border:1.2px solid #e6a458;border-radius:1.5px"></div>
<div style="left:539px;top:422px;width:19px;height:19px;border:1.2px solid #e6a458;border-radius:1.5px"></div>
<div style="left:559px;top:422px;width:19px;height:19px;border:1.2px solid #e6a458;border-radius:1.5px"></div>
<div style="left:579px;top:422px;width:19px;height:19px;border:1.2px solid #e6a458;border-radius:1.5px"></div>
<div style="left:599px;top:422px;width:19px;height:19px;border:1.2px solid #e6a458;border-radius:1.5px"></div>
<div style="left:436.8px;top:433px;width:2.6px;height:8px;background:#f86a10"></div>
<div style="left:496.8px;top:433px;width:2.6px;height:8px;background:#f86a10"></div>
<div style="left:556.8px;top:433px;width:2.6px;height:8px;background:#f86a10"></div>
<span style="left:479px;top:423px;width:19px;text-align:center;font-size:18px;color:#0a1a8a;-webkit-text-stroke:0.35px #0a1a8a">6</span>
<span style="left:499px;top:423px;width:19px;text-align:center;font-size:18px;color:#0a1a8a;-webkit-text-stroke:0.35px #0a1a8a">4</span>
<span style="left:519px;top:423px;width:19px;text-align:center;font-size:18px;color:#0a1a8a;-webkit-text-stroke:0.35px #0a1a8a">2</span>
<span style="left:539px;top:423px;width:19px;text-align:center;font-size:18px;color:#0a1a8a;-webkit-text-stroke:0.35px #0a1a8a">5</span>
<span style="left:559px;top:423px;width:19px;text-align:center;font-size:18px;color:#0a1a8a;-webkit-text-stroke:0.35px #0a1a8a">1</span>
<span style="left:579px;top:423px;width:19px;text-align:center;font-size:18px;color:#0a1a8a;-webkit-text-stroke:0.35px #0a1a8a">0</span>
<span style="left:599px;top:423px;width:19px;text-align:center;font-size:18px;color:#0a1a8a;-webkit-text-stroke:0.35px #0a1a8a">4</span>
<div style="left:253px;top:470px;width:141px;height:1px;background:#eda060"></div>
<span style="left:379px;top:449.5px;width:15px;text-align:center;font-size:13.5px;color:#d81b8a;transform:scaleX(0.8)">3</span>
<div style="left:399px;top:448px;width:19px;height:19px;border:1.2px solid #e6a458;border-radius:1.5px"></div>
<div style="left:419px;top:448px;width:19px;height:19px;border:1.2px solid #e6a458;border-radius:1.5px"></div>
<div style="left:439px;top:448px;width:19px;height:19px;border:1.2px solid #e6a458;border-radius:1.5px"></div>
<div style="left:459px;top:448px;width:19px;height:19px;border:1.2px solid #e6a458;border-radius:1.5px"></div>
<div style="left:479px;top:448px;width:19px;height:19px;border:1.2px solid #e6a458;border-radius:1.5px"></div>
<div style="left:499px;top:448px;width:19px;height:19px;border:1.2px solid #e6a458;border-radius:1.5px"></div>
<div style="left:519px;top:448px;width:19px;height:19px;border:1.2px solid #e6a458;border-radius:1.5px"></div>
<div style="left:539px;top:448px;width:19px;height:19px;border:1.2px solid #e6a458;border-radius:1.5px"></div>
<div style="left:559px;top:448px;width:19px;height:19px;border:1.2px solid #e6a458;border-radius:1.5px"></div>
<div style="left:579px;top:448px;width:19px;height:19px;border:1.2px solid #e6a458;border-radius:1.5px"></div>
<div style="left:599px;top:448px;width:19px;height:19px;border:1.2px solid #e6a458;border-radius:1.5px"></div>
<div style="left:436.8px;top:459px;width:2.6px;height:8px;background:#f86a10"></div>
<div style="left:496.8px;top:459px;width:2.6px;height:8px;background:#f86a10"></div>
<div style="left:556.8px;top:459px;width:2.6px;height:8px;background:#f86a10"></div>
<span style="left:499px;top:449px;width:19px;text-align:center;font-size:18px;color:#0a1a8a;-webkit-text-stroke:0.35px #0a1a8a">7</span>
<span style="left:519px;top:449px;width:19px;text-align:center;font-size:18px;color:#0a1a8a;-webkit-text-stroke:0.35px #0a1a8a">1</span>
<span style="left:539px;top:449px;width:19px;text-align:center;font-size:18px;color:#0a1a8a;-webkit-text-stroke:0.35px #0a1a8a">0</span>
<span style="left:559px;top:449px;width:19px;text-align:center;font-size:18px;color:#0a1a8a;-webkit-text-stroke:0.35px #0a1a8a">3</span>
<span style="left:579px;top:449px;width:19px;text-align:center;font-size:18px;color:#0a1a8a;-webkit-text-stroke:0.35px #0a1a8a">1</span>
<span style="left:599px;top:449px;width:19px;text-align:center;font-size:18px;color:#0a1a8a;-webkit-text-stroke:0.35px #0a1a8a">5</span>
<div style="left:253px;top:499px;width:141px;height:1px;background:#eda060"></div>
<span style="left:379px;top:476.5px;width:15px;text-align:center;font-size:13.5px;color:#d81b8a;transform:scaleX(0.8)">4</span>
<div style="left:399px;top:475px;width:19px;height:19px;border:1.2px solid #e6a458;border-radius:1.5px"></div>
<div style="left:419px;top:475px;width:19px;height:19px;border:1.2px solid #e6a458;border-radius:1.5px"></div>
<div style="left:439px;top:475px;width:19px;height:19px;border:1.2px solid #e6a458;border-radius:1.5px"></div>
<div style="left:459px;top:475px;width:19px;height:19px;border:1.2px solid #e6a458;border-radius:1.5px"></div>
<div style="left:479px;top:475px;width:19px;height:19px;border:1.2px solid #e6a458;border-radius:1.5px"></div>
<div style="left:499px;top:475px;width:19px;height:19px;border:1.2px solid #e6a458;border-radius:1.5px"></div>
<div style="left:519px;top:475px;width:19px;height:19px;border:1.2px solid #e6a458;border-radius:1.5px"></div>
<div style="left:539px;top:475px;width:19px;height:19px;border:1.2px solid #e6a458;border-radius:1.5px"></div>
<div style="left:559px;top:475px;width:19px;height:19px;border:1.2px solid #e6a458;border-radius:1.5px"></div>
<div style="left:579px;top:475px;width:19px;height:19px;border:1.2px solid #e6a458;border-radius:1.5px"></div>
<div style="left:599px;top:475px;width:19px;height:19px;border:1.2px solid #e6a458;border-radius:1.5px"></div>
<div style="left:436.8px;top:486px;width:2.6px;height:8px;background:#f86a10"></div>
<div style="left:496.8px;top:486px;width:2.6px;height:8px;background:#f86a10"></div>
<div style="left:556.8px;top:486px;width:2.6px;height:8px;background:#f86a10"></div>
<div style="left:272px;top:527px;width:122px;height:1px;background:#eda060"></div>
<span style="left:379px;top:505.5px;width:15px;text-align:center;font-size:13.5px;color:#d81b8a;transform:scaleX(0.8)">5</span>
<div style="left:399px;top:504px;width:19px;height:19px;border:1.2px solid #e6a458;border-radius:1.5px"></div>
<div style="left:419px;top:504px;width:19px;height:19px;border:1.2px solid #e6a458;border-radius:1.5px"></div>
<div style="left:439px;top:504px;width:19px;height:19px;border:1.2px solid #e6a458;border-radius:1.5px"></div>
<div style="left:459px;top:504px;width:19px;height:19px;border:1.2px solid #e6a458;border-radius:1.5px"></div>
<div style="left:479px;top:504px;width:19px;height:19px;border:1.2px solid #e6a458;border-radius:1.5px"></div>
<div style="left:499px;top:504px;width:19px;height:19px;border:1.2px solid #e6a458;border-radius:1.5px"></div>
<div style="left:519px;top:504px;width:19px;height:19px;border:1.2px solid #e6a458;border-radius:1.5px"></div>
<div style="left:539px;top:504px;width:19px;height:19px;border:1.2px solid #e6a458;border-radius:1.5px"></div>
<div style="left:559px;top:504px;width:19px;height:19px;border:1.2px solid #e6a458;border-radius:1.5px"></div>
<div style="left:579px;top:504px;width:19px;height:19px;border:1.2px solid #e6a458;border-radius:1.5px"></div>
<div style="left:599px;top:504px;width:19px;height:19px;border:1.2px solid #e6a458;border-radius:1.5px"></div>
<div style="left:436.8px;top:515px;width:2.6px;height:8px;background:#f86a10"></div>
<div style="left:496.8px;top:515px;width:2.6px;height:8px;background:#f86a10"></div>
<div style="left:556.8px;top:515px;width:2.6px;height:8px;background:#f86a10"></div>
<div style="left:253px;top:553px;width:141px;height:1px;background:#eda060"></div>
<span style="left:379px;top:532.5px;width:15px;text-align:center;font-size:13.5px;color:#d81b8a;transform:scaleX(0.8)">6</span>
<div style="left:399px;top:530px;width:19px;height:19px;border:1.2px solid #e6a458;border-radius:1.5px"></div>
<div style="left:419px;top:530px;width:19px;height:19px;border:1.2px solid #e6a458;border-radius:1.5px"></div>
<div style="left:439px;top:530px;width:19px;height:19px;border:1.2px solid #e6a458;border-radius:1.5px"></div>
<div style="left:459px;top:530px;width:19px;height:19px;border:1.2px solid #e6a458;border-radius:1.5px"></div>
<div style="left:479px;top:530px;width:19px;height:19px;border:1.2px solid #e6a458;border-radius:1.5px"></div>
<div style="left:499px;top:530px;width:19px;height:19px;border:1.2px solid #e6a458;border-radius:1.5px"></div>
<div style="left:519px;top:530px;width:19px;height:19px;border:1.2px solid #e6a458;border-radius:1.5px"></div>
<div style="left:539px;top:530px;width:19px;height:19px;border:1.2px solid #e6a458;border-radius:1.5px"></div>
<div style="left:559px;top:530px;width:19px;height:19px;border:1.2px solid #e6a458;border-radius:1.5px"></div>
<div style="left:579px;top:530px;width:19px;height:19px;border:1.2px solid #e6a458;border-radius:1.5px"></div>
<div style="left:599px;top:530px;width:19px;height:19px;border:1.2px solid #e6a458;border-radius:1.5px"></div>
<div style="left:436.8px;top:541px;width:2.6px;height:8px;background:#f86a10"></div>
<div style="left:496.8px;top:541px;width:2.6px;height:8px;background:#f86a10"></div>
<div style="left:556.8px;top:541px;width:2.6px;height:8px;background:#f86a10"></div>
<div style="left:272px;top:578px;width:122px;height:1px;background:#eda060"></div>
<span style="left:379px;top:557.5px;width:15px;text-align:center;font-size:13.5px;color:#d81b8a;transform:scaleX(0.8)">7</span>
<div style="left:399px;top:556px;width:19px;height:19px;border:1.2px solid #e6a458;border-radius:1.5px"></div>
<div style="left:419px;top:556px;width:19px;height:19px;border:1.2px solid #e6a458;border-radius:1.5px"></div>
<div style="left:439px;top:556px;width:19px;height:19px;border:1.2px solid #e6a458;border-radius:1.5px"></div>
<div style="left:459px;top:556px;width:19px;height:19px;border:1.2px solid #e6a458;border-radius:1.5px"></div>
<div style="left:479px;top:556px;width:19px;height:19px;border:1.2px solid #e6a458;border-radius:1.5px"></div>
<div style="left:499px;top:556px;width:19px;height:19px;border:1.2px solid #e6a458;border-radius:1.5px"></div>
<div style="left:519px;top:556px;width:19px;height:19px;border:1.2px solid #e6a458;border-radius:1.5px"></div>
<div style="left:539px;top:556px;width:19px;height:19px;border:1.2px solid #e6a458;border-radius:1.5px"></div>
<div style="left:559px;top:556px;width:19px;height:19px;border:1.2px solid #e6a458;border-radius:1.5px"></div>
<div style="left:579px;top:556px;width:19px;height:19px;border:1.2px solid #e6a458;border-radius:1.5px"></div>
<div style="left:599px;top:556px;width:19px;height:19px;border:1.2px solid #e6a458;border-radius:1.5px"></div>
<div style="left:436.8px;top:567px;width:2.6px;height:8px;background:#f86a10"></div>
<div style="left:496.8px;top:567px;width:2.6px;height:8px;background:#f86a10"></div>
<div style="left:556.8px;top:567px;width:2.6px;height:8px;background:#f86a10"></div>
<div style="left:253px;top:604px;width:141px;height:1px;background:#eda060"></div>
<span style="left:379px;top:583.5px;width:15px;text-align:center;font-size:13.5px;color:#d81b8a;transform:scaleX(0.8)">8</span>
<div style="left:399px;top:582px;width:19px;height:19px;border:1.2px solid #e6a458;border-radius:1.5px"></div>
<div style="left:419px;top:582px;width:19px;height:19px;border:1.2px solid #e6a458;border-radius:1.5px"></div>
<div style="left:439px;top:582px;width:19px;height:19px;border:1.2px solid #e6a458;border-radius:1.5px"></div>
<div style="left:459px;top:582px;width:19px;height:19px;border:1.2px solid #e6a458;border-radius:1.5px"></div>
<div style="left:479px;top:582px;width:19px;height:19px;border:1.2px solid #e6a458;border-radius:1.5px"></div>
<div style="left:499px;top:582px;width:19px;height:19px;border:1.2px solid #e6a458;border-radius:1.5px"></div>
<div style="left:519px;top:582px;width:19px;height:19px;border:1.2px solid #e6a458;border-radius:1.5px"></div>
<div style="left:539px;top:582px;width:19px;height:19px;border:1.2px solid #e6a458;border-radius:1.5px"></div>
<div style="left:559px;top:582px;width:19px;height:19px;border:1.2px solid #e6a458;border-radius:1.5px"></div>
<div style="left:579px;top:582px;width:19px;height:19px;border:1.2px solid #e6a458;border-radius:1.5px"></div>
<div style="left:599px;top:582px;width:19px;height:19px;border:1.2px solid #e6a458;border-radius:1.5px"></div>
<div style="left:436.8px;top:593px;width:2.6px;height:8px;background:#f86a10"></div>
<div style="left:496.8px;top:593px;width:2.6px;height:8px;background:#f86a10"></div>
<div style="left:556.8px;top:593px;width:2.6px;height:8px;background:#f86a10"></div>
<span style="left:255.0px;top:387px;font-size:12.5px;color:#2a2a2a;">所</span>
<span style="left:267.2px;top:387px;font-size:12.5px;color:#2a2a2a;">得</span>
<span style="left:279.3px;top:387px;font-size:12.5px;color:#2a2a2a;">金</span>
<span style="left:291.5px;top:387px;font-size:12.5px;color:#2a2a2a;">額</span>
<span style="left:303.7px;top:387px;font-size:12.5px;color:#2a2a2a;">又</span>
<span style="left:315.8px;top:387px;font-size:12.5px;color:#2a2a2a;">は</span>
<span style="left:328.0px;top:387px;font-size:12.5px;color:#2a2a2a;">欠</span>
<span style="left:340.2px;top:387px;font-size:12.5px;color:#2a2a2a;">損</span>
<span style="left:352.3px;top:387px;font-size:12.5px;color:#2a2a2a;">金</span>
<span style="left:364.5px;top:387px;font-size:12.5px;color:#2a2a2a;">額</span>
<span style="left:255px;top:403px;width:122px;text-align:center;font-size:12px;color:#2a2a2a;">(別表四「52の①」)</span>
<span style="left:255.0px;top:421px;font-size:12px;color:#2a2a2a;">法</span>
<span style="left:291.7px;top:421px;font-size:12px;color:#2a2a2a;">人</span>
<span style="left:328.3px;top:421px;font-size:12px;color:#2a2a2a;">税</span>
<span style="left:365.0px;top:421px;font-size:12px;color:#2a2a2a;">額</span>
<span style="left:255px;top:432px;width:122px;text-align:center;font-size:10.5px;color:#2a2a2a;">(48)＋(49)＋(50)</span>
<span style="left:255.0px;top:447px;font-size:11.5px;color:#2a2a2a;">法</span>
<span style="left:267.3px;top:447px;font-size:11.5px;color:#2a2a2a;">人</span>
<span style="left:279.6px;top:447px;font-size:11.5px;color:#2a2a2a;">税</span>
<span style="left:291.8px;top:447px;font-size:11.5px;color:#2a2a2a;">額</span>
<span style="left:304.1px;top:447px;font-size:11.5px;color:#2a2a2a;">の</span>
<span style="left:316.4px;top:447px;font-size:11.5px;color:#2a2a2a;">特</span>
<span style="left:328.7px;top:447px;font-size:11.5px;color:#2a2a2a;">別</span>
<span style="left:340.9px;top:447px;font-size:11.5px;color:#2a2a2a;">控</span>
<span style="left:353.2px;top:447px;font-size:11.5px;color:#2a2a2a;">除</span>
<span style="left:365.5px;top:447px;font-size:11.5px;color:#2a2a2a;">額</span>
<span style="left:255px;top:458px;width:122px;text-align:center;font-size:10.5px;color:#2a2a2a;">(別表六(六)「5」)</span>
<span style="left:255.0px;top:472px;font-size:12.5px;color:#2a2a2a;">税</span>
<span style="left:273.2px;top:472px;font-size:12.5px;color:#2a2a2a;">額</span>
<span style="left:291.5px;top:472px;font-size:12.5px;color:#2a2a2a;">控</span>
<span style="left:309.8px;top:472px;font-size:12.5px;color:#2a2a2a;">除</span>
<span style="left:328.0px;top:472px;font-size:12.5px;color:#2a2a2a;">超</span>
<span style="left:346.2px;top:472px;font-size:12.5px;color:#2a2a2a;">過</span>
<span style="left:364.5px;top:472px;font-size:12.5px;color:#2a2a2a;">額</span>
<span style="left:255.0px;top:485px;font-size:12.5px;color:#2a2a2a;">相</span>
<span style="left:270.6px;top:485px;font-size:12.5px;color:#2a2a2a;">当</span>
<span style="left:286.3px;top:485px;font-size:12.5px;color:#2a2a2a;">額</span>
<span style="left:301.9px;top:485px;font-size:12.5px;color:#2a2a2a;">等</span>
<span style="left:317.6px;top:485px;font-size:12.5px;color:#2a2a2a;">の</span>
<span style="left:333.2px;top:485px;font-size:12.5px;color:#2a2a2a;">加</span>
<span style="left:348.9px;top:485px;font-size:12.5px;color:#2a2a2a;">算</span>
<span style="left:364.5px;top:485px;font-size:12.5px;color:#2a2a2a;">額</span>
<div style="left:272px;top:499px;width:1px;height:105px;background:#eda060"></div>
<div style="left:253px;top:553px;width:19px;height:1px;background:#eda060"></div>
<span style="left:253px;top:501.5px;font-size:10.5px;color:#222;">土</span>
<span style="left:262.5px;top:501.5px;font-size:10.5px;color:#222;">利</span>
<span style="left:253px;top:514px;font-size:10.5px;color:#222;">地</span>
<span style="left:262.5px;top:519px;font-size:10.5px;color:#222;">益</span>
<span style="left:253px;top:527.5px;font-size:10.5px;color:#222;">譲</span>
<span style="left:253px;top:540px;font-size:10.5px;color:#222;">渡</span>
<span style="left:262.5px;top:540px;font-size:10.5px;color:#222;">金</span>
<span style="left:274.0px;top:501px;font-size:10.5px;color:#2a2a2a;">課</span>
<span style="left:284.3px;top:501px;font-size:10.5px;color:#2a2a2a;">税</span>
<span style="left:294.6px;top:501px;font-size:10.5px;color:#2a2a2a;">土</span>
<span style="left:304.8px;top:501px;font-size:10.5px;color:#2a2a2a;">地</span>
<span style="left:315.1px;top:501px;font-size:10.5px;color:#2a2a2a;">譲</span>
<span style="left:325.4px;top:501px;font-size:10.5px;color:#2a2a2a;">渡</span>
<span style="left:335.7px;top:501px;font-size:10.5px;color:#2a2a2a;">利</span>
<span style="left:345.9px;top:501px;font-size:10.5px;color:#2a2a2a;">益</span>
<span style="left:356.2px;top:501px;font-size:10.5px;color:#2a2a2a;">金</span>
<span style="left:366.5px;top:501px;font-size:10.5px;color:#2a2a2a;">額</span>
<span style="left:274px;top:512.5px;width:103px;font-size:6.3px;color:#111;-webkit-text-stroke:0.2px #111;text-align:justify;text-align-last:justify">(別表三(二)「24」)+(別表三(二</span>
<span style="left:274px;top:520px;width:103px;font-size:6.3px;color:#111;-webkit-text-stroke:0.2px #111;text-align:justify;text-align-last:justify">の二)「25」)+(別表三(三)「20」)</span>
<span style="left:274.0px;top:529px;font-size:11.5px;color:#2a2a2a;">同</span>
<span style="left:287.1px;top:529px;font-size:11.5px;color:#2a2a2a;">上</span>
<span style="left:300.1px;top:529px;font-size:11.5px;color:#2a2a2a;">に</span>
<span style="left:313.2px;top:529px;font-size:11.5px;color:#2a2a2a;">対</span>
<span style="left:326.3px;top:529px;font-size:11.5px;color:#2a2a2a;">す</span>
<span style="left:339.4px;top:529px;font-size:11.5px;color:#2a2a2a;">る</span>
<span style="left:352.4px;top:529px;font-size:11.5px;color:#2a2a2a;">税</span>
<span style="left:365.5px;top:529px;font-size:11.5px;color:#2a2a2a;">額</span>
<span style="left:274px;top:542px;width:103px;text-align:center;font-size:10.5px;color:#2a2a2a;">(62)＋(63)＋(64)</span>
<span style="left:255.5px;top:556px;font-size:13.5px;color:#222;">留</span>
<span style="left:255.5px;top:573.5px;font-size:13.5px;color:#222;">保</span>
<span style="left:255.5px;top:591px;font-size:13.5px;color:#222;">金</span>
<span style="left:274.0px;top:556px;font-size:12px;color:#2a2a2a;">課</span>
<span style="left:292.2px;top:556px;font-size:12px;color:#2a2a2a;">税</span>
<span style="left:310.4px;top:556px;font-size:12px;color:#2a2a2a;">留</span>
<span style="left:328.6px;top:556px;font-size:12px;color:#2a2a2a;">保</span>
<span style="left:346.8px;top:556px;font-size:12px;color:#2a2a2a;">金</span>
<span style="left:365.0px;top:556px;font-size:12px;color:#2a2a2a;">額</span>
<span style="left:274px;top:567px;width:103px;text-align:center;font-size:10.5px;color:#2a2a2a;">(別表三(一)「4」)</span>
<span style="left:274.0px;top:581px;font-size:12px;color:#2a2a2a;">同</span>
<span style="left:287.0px;top:581px;font-size:12px;color:#2a2a2a;">上</span>
<span style="left:300.0px;top:581px;font-size:12px;color:#2a2a2a;">に</span>
<span style="left:313.0px;top:581px;font-size:12px;color:#2a2a2a;">対</span>
<span style="left:326.0px;top:581px;font-size:12px;color:#2a2a2a;">す</span>
<span style="left:339.0px;top:581px;font-size:12px;color:#2a2a2a;">る</span>
<span style="left:352.0px;top:581px;font-size:12px;color:#2a2a2a;">税</span>
<span style="left:365.0px;top:581px;font-size:12px;color:#2a2a2a;">額</span>
<span style="left:274px;top:593px;width:103px;text-align:center;font-size:10.5px;color:#2a2a2a;">(別表三(一)「8」)</span>
<span style="left:239px;top:450.0px;font-size:13px;color:#222;">こ</span>
<span style="left:239px;top:470.3px;font-size:13px;color:#222;">の</span>
<span style="left:239px;top:490.6px;font-size:13px;color:#222;">申</span>
<span style="left:239px;top:510.9px;font-size:13px;color:#222;">告</span>
<span style="left:239px;top:531.2px;font-size:13px;color:#222;">書</span>
<span style="left:239px;top:551.5px;font-size:13px;color:#222;">に</span>
<span style="left:239px;top:571.8px;font-size:13px;color:#222;">よ</span>
<span style="left:239px;top:592.1px;font-size:13px;color:#222;">る</span>
<span style="left:239px;top:612.4px;font-size:13px;color:#222;">法</span>
<div style="left:439px;top:608px;width:19px;height:19px;border:1.2px solid #e6a458;border-radius:1.5px"></div>
<div style="left:459px;top:608px;width:19px;height:19px;border:1.2px solid #e6a458;border-radius:1.5px"></div>
<div style="left:479px;top:608px;width:19px;height:19px;border:1.2px solid #e6a458;border-radius:1.5px"></div>
<div style="left:499px;top:608px;width:19px;height:19px;border:1.2px solid #e6a458;border-radius:1.5px"></div>
<div style="left:519px;top:608px;width:19px;height:19px;border:1.2px solid #e6a458;border-radius:1.5px"></div>
<div style="left:539px;top:608px;width:19px;height:19px;border:1.2px solid #e6a458;border-radius:1.5px"></div>
<div style="left:559px;top:608px;width:19px;height:19px;border:1.2px solid #e6a458;border-radius:1.5px"></div>
<div style="left:579px;top:608px;width:19px;height:19px;border:1.2px solid #e6a458;border-radius:1.5px"></div>
<div style="left:599px;top:608px;width:19px;height:19px;border:1.2px solid #e6a458;border-radius:1.5px"></div>
<div style="left:496.8px;top:619px;width:2.6px;height:8px;background:#f86a10"></div>
<div style="left:556.8px;top:619px;width:2.6px;height:8px;background:#f86a10"></div>
<div style="left:637px;top:384px;width:2px;height:242px;background:#f07a1e"></div>
<div style="left:660px;top:384px;width:1px;height:242px;background:#eda060"></div>
<div style="left:771px;top:384px;width:1px;height:242px;background:#eda060"></div>
<div style="left:785px;top:384px;width:1px;height:242px;background:#eda060"></div>
<div style="left:1027px;top:382px;width:2px;height:244px;background:#f07a1e"></div>
<div style="left:237px;top:382px;width:792px;height:2px;background:#f07a1e"></div>
<span style="left:811.5px;top:388px;font-size:9.5px;color:#d81b8a;">十億</span>
<span style="left:872.5px;top:388px;font-size:9.5px;color:#d81b8a;">百万</span>
<span style="left:941.5px;top:388px;font-size:9.5px;color:#d81b8a;">千</span>
<span style="left:1004.5px;top:388px;font-size:9.5px;color:#d81b8a;">円</span>
<div style="left:660px;top:419px;width:125px;height:1px;background:#eda060"></div>
<span style="left:771px;top:393.5px;width:15px;text-align:center;font-size:13.5px;color:#d81b8a;transform:scaleX(0.72);letter-spacing:0">16</span>
<div style="left:793px;top:397px;width:19px;height:19px;border:1.2px solid #e6a458;border-radius:1.5px"></div>
<div style="left:813px;top:397px;width:19px;height:19px;border:1.2px solid #e6a458;border-radius:1.5px"></div>
<div style="left:833px;top:397px;width:19px;height:19px;border:1.2px solid #e6a458;border-radius:1.5px"></div>
<div style="left:853px;top:397px;width:19px;height:19px;border:1.2px solid #e6a458;border-radius:1.5px"></div>
<div style="left:873px;top:397px;width:19px;height:19px;border:1.2px solid #e6a458;border-radius:1.5px"></div>
<div style="left:893px;top:397px;width:19px;height:19px;border:1.2px solid #e6a458;border-radius:1.5px"></div>
<div style="left:913px;top:397px;width:19px;height:19px;border:1.2px solid #e6a458;border-radius:1.5px"></div>
<div style="left:933px;top:397px;width:19px;height:19px;border:1.2px solid #e6a458;border-radius:1.5px"></div>
<div style="left:953px;top:397px;width:19px;height:19px;border:1.2px solid #e6a458;border-radius:1.5px"></div>
<div style="left:973px;top:397px;width:19px;height:19px;border:1.2px solid #e6a458;border-radius:1.5px"></div>
<div style="left:993px;top:397px;width:19px;height:19px;border:1.2px solid #e6a458;border-radius:1.5px"></div>
<div style="left:830.8px;top:408px;width:2.6px;height:8px;background:#f86a10"></div>
<div style="left:890.8px;top:408px;width:2.6px;height:8px;background:#f86a10"></div>
<div style="left:950.8px;top:408px;width:2.6px;height:8px;background:#f86a10"></div>
<span style="left:913px;top:398px;width:19px;text-align:center;font-size:18px;color:#0a1a8a;-webkit-text-stroke:0.35px #0a1a8a">9</span>
<span style="left:933px;top:398px;width:19px;text-align:center;font-size:18px;color:#0a1a8a;-webkit-text-stroke:0.35px #0a1a8a">1</span>
<span style="left:953px;top:398px;width:19px;text-align:center;font-size:18px;color:#0a1a8a;-webkit-text-stroke:0.35px #0a1a8a">6</span>
<span style="left:973px;top:398px;width:19px;text-align:center;font-size:18px;color:#0a1a8a;-webkit-text-stroke:0.35px #0a1a8a">3</span>
<span style="left:993px;top:398px;width:19px;text-align:center;font-size:18px;color:#0a1a8a;-webkit-text-stroke:0.35px #0a1a8a">4</span>
<div style="left:660px;top:445px;width:125px;height:1px;background:#eda060"></div>
<span style="left:771px;top:424.5px;width:15px;text-align:center;font-size:13.5px;color:#d81b8a;transform:scaleX(0.72);letter-spacing:0">17</span>
<div style="left:793px;top:422px;width:19px;height:19px;border:1.2px solid #e6a458;border-radius:1.5px"></div>
<div style="left:813px;top:422px;width:19px;height:19px;border:1.2px solid #e6a458;border-radius:1.5px"></div>
<div style="left:833px;top:422px;width:19px;height:19px;border:1.2px solid #e6a458;border-radius:1.5px"></div>
<div style="left:853px;top:422px;width:19px;height:19px;border:1.2px solid #e6a458;border-radius:1.5px"></div>
<div style="left:873px;top:422px;width:19px;height:19px;border:1.2px solid #e6a458;border-radius:1.5px"></div>
<div style="left:893px;top:422px;width:19px;height:19px;border:1.2px solid #e6a458;border-radius:1.5px"></div>
<div style="left:913px;top:422px;width:19px;height:19px;border:1.2px solid #e6a458;border-radius:1.5px"></div>
<div style="left:933px;top:422px;width:19px;height:19px;border:1.2px solid #e6a458;border-radius:1.5px"></div>
<div style="left:953px;top:422px;width:19px;height:19px;border:1.2px solid #e6a458;border-radius:1.5px"></div>
<div style="left:973px;top:422px;width:19px;height:19px;border:1.2px solid #e6a458;border-radius:1.5px"></div>
<div style="left:993px;top:422px;width:19px;height:19px;border:1.2px solid #e6a458;border-radius:1.5px"></div>
<div style="left:830.8px;top:433px;width:2.6px;height:8px;background:#f86a10"></div>
<div style="left:890.8px;top:433px;width:2.6px;height:8px;background:#f86a10"></div>
<div style="left:950.8px;top:433px;width:2.6px;height:8px;background:#f86a10"></div>
<div style="left:660px;top:470px;width:125px;height:1px;background:#eda060"></div>
<span style="left:771px;top:449.5px;width:15px;text-align:center;font-size:13.5px;color:#d81b8a;transform:scaleX(0.72);letter-spacing:0">18</span>
<div style="left:793px;top:448px;width:19px;height:19px;border:1.2px solid #e6a458;border-radius:1.5px"></div>
<div style="left:813px;top:448px;width:19px;height:19px;border:1.2px solid #e6a458;border-radius:1.5px"></div>
<div style="left:833px;top:448px;width:19px;height:19px;border:1.2px solid #e6a458;border-radius:1.5px"></div>
<div style="left:853px;top:448px;width:19px;height:19px;border:1.2px solid #e6a458;border-radius:1.5px"></div>
<div style="left:873px;top:448px;width:19px;height:19px;border:1.2px solid #e6a458;border-radius:1.5px"></div>
<div style="left:893px;top:448px;width:19px;height:19px;border:1.2px solid #e6a458;border-radius:1.5px"></div>
<div style="left:913px;top:448px;width:19px;height:19px;border:1.2px solid #e6a458;border-radius:1.5px"></div>
<div style="left:933px;top:448px;width:19px;height:19px;border:1.2px solid #e6a458;border-radius:1.5px"></div>
<div style="left:953px;top:448px;width:19px;height:19px;border:1.2px solid #e6a458;border-radius:1.5px"></div>
<div style="left:973px;top:448px;width:19px;height:19px;border:1.2px solid #e6a458;border-radius:1.5px"></div>
<div style="left:993px;top:448px;width:19px;height:19px;border:1.2px solid #e6a458;border-radius:1.5px"></div>
<div style="left:830.8px;top:459px;width:2.6px;height:8px;background:#f86a10"></div>
<div style="left:890.8px;top:459px;width:2.6px;height:8px;background:#f86a10"></div>
<div style="left:950.8px;top:459px;width:2.6px;height:8px;background:#f86a10"></div>
<span style="left:913px;top:449px;width:19px;text-align:center;font-size:18px;color:#0a1a8a;-webkit-text-stroke:0.35px #0a1a8a">9</span>
<span style="left:933px;top:449px;width:19px;text-align:center;font-size:18px;color:#0a1a8a;-webkit-text-stroke:0.35px #0a1a8a">1</span>
<span style="left:953px;top:449px;width:19px;text-align:center;font-size:18px;color:#0a1a8a;-webkit-text-stroke:0.35px #0a1a8a">6</span>
<span style="left:973px;top:449px;width:19px;text-align:center;font-size:18px;color:#0a1a8a;-webkit-text-stroke:0.35px #0a1a8a">3</span>
<span style="left:993px;top:449px;width:19px;text-align:center;font-size:18px;color:#0a1a8a;-webkit-text-stroke:0.35px #0a1a8a">4</span>
<div style="left:660px;top:496px;width:125px;height:1px;background:#eda060"></div>
<span style="left:771px;top:475.5px;width:15px;text-align:center;font-size:13.5px;color:#d81b8a;transform:scaleX(0.72);letter-spacing:0">19</span>
<div style="left:793px;top:474px;width:19px;height:19px;border:1.2px solid #e6a458;border-radius:1.5px"></div>
<div style="left:813px;top:474px;width:19px;height:19px;border:1.2px solid #e6a458;border-radius:1.5px"></div>
<div style="left:833px;top:474px;width:19px;height:19px;border:1.2px solid #e6a458;border-radius:1.5px"></div>
<div style="left:853px;top:474px;width:19px;height:19px;border:1.2px solid #e6a458;border-radius:1.5px"></div>
<div style="left:873px;top:474px;width:19px;height:19px;border:1.2px solid #e6a458;border-radius:1.5px"></div>
<div style="left:893px;top:474px;width:19px;height:19px;border:1.2px solid #e6a458;border-radius:1.5px"></div>
<div style="left:913px;top:474px;width:19px;height:19px;border:1.2px solid #e6a458;border-radius:1.5px"></div>
<div style="left:933px;top:474px;width:19px;height:19px;border:1.2px solid #e6a458;border-radius:1.5px"></div>
<div style="left:953px;top:474px;width:19px;height:19px;border:1.2px solid #e6a458;border-radius:1.5px"></div>
<div style="left:973px;top:474px;width:19px;height:19px;border:1.2px solid #e6a458;border-radius:1.5px"></div>
<div style="left:993px;top:474px;width:19px;height:19px;border:1.2px solid #e6a458;border-radius:1.5px"></div>
<div style="left:830.8px;top:485px;width:2.6px;height:8px;background:#f86a10"></div>
<div style="left:890.8px;top:485px;width:2.6px;height:8px;background:#f86a10"></div>
<div style="left:950.8px;top:485px;width:2.6px;height:8px;background:#f86a10"></div>
<span style="left:913px;top:475px;width:19px;text-align:center;font-size:18px;color:#0a1a8a;-webkit-text-stroke:0.35px #0a1a8a">9</span>
<span style="left:933px;top:475px;width:19px;text-align:center;font-size:18px;color:#0a1a8a;-webkit-text-stroke:0.35px #0a1a8a">1</span>
<span style="left:953px;top:475px;width:19px;text-align:center;font-size:18px;color:#0a1a8a;-webkit-text-stroke:0.35px #0a1a8a">6</span>
<span style="left:973px;top:475px;width:19px;text-align:center;font-size:18px;color:#0a1a8a;-webkit-text-stroke:0.35px #0a1a8a">3</span>
<span style="left:993px;top:475px;width:19px;text-align:center;font-size:18px;color:#0a1a8a;-webkit-text-stroke:0.35px #0a1a8a">4</span>
<div style="left:639px;top:521px;width:377px;height:1px;background:#eda060"></div>
<span style="left:771px;top:500.5px;width:15px;text-align:center;font-size:13.5px;color:#d81b8a;transform:scaleX(0.72);letter-spacing:0">20</span>
<div style="left:793px;top:499px;width:19px;height:19px;border:1.2px solid #e6a458;border-radius:1.5px"></div>
<div style="left:813px;top:499px;width:19px;height:19px;border:1.2px solid #e6a458;border-radius:1.5px"></div>
<div style="left:833px;top:499px;width:19px;height:19px;border:1.2px solid #e6a458;border-radius:1.5px"></div>
<div style="left:853px;top:499px;width:19px;height:19px;border:1.2px solid #e6a458;border-radius:1.5px"></div>
<div style="left:873px;top:499px;width:19px;height:19px;border:1.2px solid #e6a458;border-radius:1.5px"></div>
<div style="left:893px;top:499px;width:19px;height:19px;border:1.2px solid #e6a458;border-radius:1.5px"></div>
<div style="left:913px;top:499px;width:19px;height:19px;border:1.2px solid #e6a458;border-radius:1.5px"></div>
<div style="left:933px;top:499px;width:19px;height:19px;border:1.2px solid #e6a458;border-radius:1.5px"></div>
<div style="left:953px;top:499px;width:19px;height:19px;border:1.2px solid #e6a458;border-radius:1.5px"></div>
<div style="left:973px;top:499px;width:19px;height:19px;border:1.2px solid #e6a458;border-radius:1.5px"></div>
<div style="left:993px;top:499px;width:19px;height:19px;border:1.2px solid #e6a458;border-radius:1.5px"></div>
<div style="left:830.8px;top:510px;width:2.6px;height:8px;background:#f86a10"></div>
<div style="left:890.8px;top:510px;width:2.6px;height:8px;background:#f86a10"></div>
<div style="left:950.8px;top:510px;width:2.6px;height:8px;background:#f86a10"></div>
<span style="left:993px;top:500px;width:19px;text-align:center;font-size:18px;color:#0a1a8a;-webkit-text-stroke:0.35px #0a1a8a">0</span>
<div style="left:660px;top:559px;width:125px;height:1px;background:#eda060"></div>
<span style="left:771px;top:532.5px;width:15px;text-align:center;font-size:13.5px;color:#d81b8a;transform:scaleX(0.72);letter-spacing:0">21</span>
<div style="left:793px;top:539px;width:19px;height:19px;border:1.2px solid #e6a458;border-radius:1.5px"></div>
<div style="left:813px;top:539px;width:19px;height:19px;border:1.2px solid #e6a458;border-radius:1.5px"></div>
<div style="left:833px;top:539px;width:19px;height:19px;border:1.2px solid #e6a458;border-radius:1.5px"></div>
<div style="left:853px;top:539px;width:19px;height:19px;border:1.2px solid #e6a458;border-radius:1.5px"></div>
<div style="left:873px;top:539px;width:19px;height:19px;border:1.2px solid #e6a458;border-radius:1.5px"></div>
<div style="left:893px;top:539px;width:19px;height:19px;border:1.2px solid #e6a458;border-radius:1.5px"></div>
<div style="left:913px;top:539px;width:19px;height:19px;border:1.2px solid #e6a458;border-radius:1.5px"></div>
<div style="left:933px;top:539px;width:19px;height:19px;border:1.2px solid #e6a458;border-radius:1.5px"></div>
<div style="left:953px;top:539px;width:19px;height:19px;border:1.2px solid #e6a458;border-radius:1.5px"></div>
<div style="left:973px;top:539px;width:19px;height:19px;border:1.2px solid #e6a458;border-radius:1.5px"></div>
<div style="left:993px;top:539px;width:19px;height:19px;border:1.2px solid #e6a458;border-radius:1.5px"></div>
<div style="left:830.8px;top:550px;width:2.6px;height:8px;background:#f86a10"></div>
<div style="left:890.8px;top:550px;width:2.6px;height:8px;background:#f86a10"></div>
<div style="left:950.8px;top:550px;width:2.6px;height:8px;background:#f86a10"></div>
<div style="left:660px;top:593px;width:125px;height:1px;background:#eda060"></div>
<span style="left:771px;top:568.5px;width:15px;text-align:center;font-size:13.5px;color:#d81b8a;transform:scaleX(0.72);letter-spacing:0">22</span>
<div style="left:793px;top:572px;width:19px;height:19px;border:1.2px solid #e6a458;border-radius:1.5px"></div>
<div style="left:813px;top:572px;width:19px;height:19px;border:1.2px solid #e6a458;border-radius:1.5px"></div>
<div style="left:833px;top:572px;width:19px;height:19px;border:1.2px solid #e6a458;border-radius:1.5px"></div>
<div style="left:853px;top:572px;width:19px;height:19px;border:1.2px solid #e6a458;border-radius:1.5px"></div>
<div style="left:873px;top:572px;width:19px;height:19px;border:1.2px solid #e6a458;border-radius:1.5px"></div>
<div style="left:893px;top:572px;width:19px;height:19px;border:1.2px solid #e6a458;border-radius:1.5px"></div>
<div style="left:913px;top:572px;width:19px;height:19px;border:1.2px solid #e6a458;border-radius:1.5px"></div>
<div style="left:933px;top:572px;width:19px;height:19px;border:1.2px solid #e6a458;border-radius:1.5px"></div>
<div style="left:953px;top:572px;width:19px;height:19px;border:1.2px solid #e6a458;border-radius:1.5px"></div>
<div style="left:973px;top:572px;width:19px;height:19px;border:1.2px solid #e6a458;border-radius:1.5px"></div>
<div style="left:993px;top:572px;width:19px;height:19px;border:1.2px solid #e6a458;border-radius:1.5px"></div>
<div style="left:830.8px;top:583px;width:2.6px;height:8px;background:#f86a10"></div>
<div style="left:890.8px;top:583px;width:2.6px;height:8px;background:#f86a10"></div>
<div style="left:950.8px;top:583px;width:2.6px;height:8px;background:#f86a10"></div>
<div style="left:1016px;top:384px;width:1px;height:242px;background:#eda060"></div>
<span style="left:771px;top:600px;width:15px;text-align:center;font-size:13.5px;color:#d81b8a;transform:scaleX(0.72)">23</span>
<span style="left:787px;top:596px;font-size:12px;color:#d81b8a;">外</span>
<div style="left:793px;top:611px;width:19px;height:19px;border:1.2px solid #e6a458;border-radius:1.5px"></div>
<div style="left:813px;top:611px;width:19px;height:19px;border:1.2px solid #e6a458;border-radius:1.5px"></div>
<div style="left:833px;top:611px;width:19px;height:19px;border:1.2px solid #e6a458;border-radius:1.5px"></div>
<div style="left:853px;top:611px;width:19px;height:19px;border:1.2px solid #e6a458;border-radius:1.5px"></div>
<div style="left:873px;top:611px;width:19px;height:19px;border:1.2px solid #e6a458;border-radius:1.5px"></div>
<div style="left:893px;top:611px;width:19px;height:19px;border:1.2px solid #e6a458;border-radius:1.5px"></div>
<div style="left:913px;top:611px;width:19px;height:19px;border:1.2px solid #e6a458;border-radius:1.5px"></div>
<div style="left:933px;top:611px;width:19px;height:19px;border:1.2px solid #e6a458;border-radius:1.5px"></div>
<div style="left:953px;top:611px;width:19px;height:19px;border:1.2px solid #e6a458;border-radius:1.5px"></div>
<div style="left:973px;top:611px;width:19px;height:19px;border:1.2px solid #e6a458;border-radius:1.5px"></div>
<div style="left:993px;top:611px;width:19px;height:19px;border:1.2px solid #e6a458;border-radius:1.5px"></div>
<div style="left:830.8px;top:622px;width:2.6px;height:8px;background:#f86a10"></div>
<div style="left:890.8px;top:622px;width:2.6px;height:8px;background:#f86a10"></div>
<div style="left:950.8px;top:622px;width:2.6px;height:8px;background:#f86a10"></div>
<span style="left:663.0px;top:387px;font-size:12px;color:#2a2a2a;">所</span>
<span style="left:686.5px;top:387px;font-size:12px;color:#2a2a2a;">得</span>
<span style="left:710.0px;top:387px;font-size:12px;color:#2a2a2a;">税</span>
<span style="left:733.5px;top:387px;font-size:12px;color:#2a2a2a;">の</span>
<span style="left:757.0px;top:387px;font-size:12px;color:#2a2a2a;">額</span>
<span style="left:663px;top:404px;width:106px;text-align:center;font-size:10.2px;color:#2a2a2a;">(別表六(一)「6の③」)</span>
<span style="left:663.0px;top:421px;font-size:11px;color:#2a2a2a;">外</span>
<span style="left:694.7px;top:421px;font-size:11px;color:#2a2a2a;">国</span>
<span style="left:726.3px;top:421px;font-size:11px;color:#2a2a2a;">税</span>
<span style="left:758.0px;top:421px;font-size:11px;color:#2a2a2a;">額</span>
<span style="left:663px;top:432px;width:106px;text-align:center;font-size:10.5px;color:#2a2a2a;">(別表六(二)「23」)</span>
<span style="left:663px;top:447px;width:106px;text-align:center;font-size:10.5px;color:#2a2a2a;">計</span>
<span style="left:663px;top:458px;width:106px;text-align:center;font-size:10.5px;color:#2a2a2a;">(16)＋(17)</span>
<span style="left:663.0px;top:473px;font-size:11px;color:#2a2a2a;">控</span>
<span style="left:682.0px;top:473px;font-size:11px;color:#2a2a2a;">除</span>
<span style="left:701.0px;top:473px;font-size:11px;color:#2a2a2a;">し</span>
<span style="left:720.0px;top:473px;font-size:11px;color:#2a2a2a;">た</span>
<span style="left:739.0px;top:473px;font-size:11px;color:#2a2a2a;">金</span>
<span style="left:758.0px;top:473px;font-size:11px;color:#2a2a2a;">額</span>
<span style="left:663px;top:484px;width:106px;text-align:center;font-size:10.5px;color:#2a2a2a;">(12)</span>
<span style="left:662.0px;top:498px;font-size:9.8px;color:#2a2a2a;">控</span>
<span style="left:671.7px;top:498px;font-size:9.8px;color:#2a2a2a;">除</span>
<span style="left:681.4px;top:498px;font-size:9.8px;color:#2a2a2a;">し</span>
<span style="left:691.2px;top:498px;font-size:9.8px;color:#2a2a2a;">き</span>
<span style="left:700.9px;top:498px;font-size:9.8px;color:#2a2a2a;">れ</span>
<span style="left:710.6px;top:498px;font-size:9.8px;color:#2a2a2a;">な</span>
<span style="left:720.3px;top:498px;font-size:9.8px;color:#2a2a2a;">か</span>
<span style="left:730.0px;top:498px;font-size:9.8px;color:#2a2a2a;">っ</span>
<span style="left:739.8px;top:498px;font-size:9.8px;color:#2a2a2a;">た</span>
<span style="left:749.5px;top:498px;font-size:9.8px;color:#2a2a2a;">金</span>
<span style="left:759.2px;top:498px;font-size:9.8px;color:#2a2a2a;">額</span>
<span style="left:663px;top:509px;width:106px;text-align:center;font-size:10.5px;color:#2a2a2a;">(18)－(19)</span>
<span style="left:642px;top:387.0px;font-size:14px;color:#222;">控</span>
<span style="left:642px;top:406.4px;font-size:14px;color:#222;">除</span>
<span style="left:642px;top:425.8px;font-size:14px;color:#222;">税</span>
<span style="left:642px;top:445.2px;font-size:14px;color:#222;">額</span>
<span style="left:642px;top:464.6px;font-size:14px;color:#222;">の</span>
<span style="left:642px;top:484.0px;font-size:14px;color:#222;">計</span>
<span style="left:642px;top:503.4px;font-size:14px;color:#222;">算</span>
<span style="left:662.0px;top:528.5px;font-size:10.5px;color:#2a2a2a;">所</span>
<span style="left:672.7px;top:528.5px;font-size:10.5px;color:#2a2a2a;">得</span>
<span style="left:683.4px;top:528.5px;font-size:10.5px;color:#2a2a2a;">税</span>
<span style="left:694.2px;top:528.5px;font-size:10.5px;color:#2a2a2a;">額</span>
<span style="left:704.9px;top:528.5px;font-size:10.5px;color:#2a2a2a;">等</span>
<span style="left:715.6px;top:528.5px;font-size:10.5px;color:#2a2a2a;">の</span>
<span style="left:726.3px;top:528.5px;font-size:10.5px;color:#2a2a2a;">還</span>
<span style="left:737.1px;top:528.5px;font-size:10.5px;color:#2a2a2a;">付</span>
<span style="left:747.8px;top:528.5px;font-size:10.5px;color:#2a2a2a;">金</span>
<span style="left:758.5px;top:528.5px;font-size:10.5px;color:#2a2a2a;">額</span>
<span style="left:663px;top:543px;width:106px;text-align:center;font-size:12px;color:#2a2a2a;">(20)</span>
<span style="left:663.0px;top:563px;font-size:12px;color:#2a2a2a;">中</span>
<span style="left:686.5px;top:563px;font-size:12px;color:#2a2a2a;">間</span>
<span style="left:710.0px;top:563px;font-size:12px;color:#2a2a2a;">納</span>
<span style="left:733.5px;top:563px;font-size:12px;color:#2a2a2a;">付</span>
<span style="left:757.0px;top:563px;font-size:12px;color:#2a2a2a;">額</span>
<span style="left:663px;top:578px;width:106px;text-align:center;font-size:11px;color:#2a2a2a;">(14)－(13)</span>
<span style="left:663.0px;top:597px;font-size:13px;color:#2a2a2a;">欠</span>
<span style="left:676.3px;top:597px;font-size:13px;color:#2a2a2a;">損</span>
<span style="left:689.6px;top:597px;font-size:13px;color:#2a2a2a;">金</span>
<span style="left:702.9px;top:597px;font-size:13px;color:#2a2a2a;">の</span>
<span style="left:716.1px;top:597px;font-size:13px;color:#2a2a2a;">繰</span>
<span style="left:729.4px;top:597px;font-size:13px;color:#2a2a2a;">戻</span>
<span style="left:742.7px;top:597px;font-size:13px;color:#2a2a2a;">し</span>
<span style="left:756.0px;top:597px;font-size:13px;color:#2a2a2a;">に</span>
<span style="left:663.0px;top:612px;font-size:13px;color:#2a2a2a;">よ</span>
<span style="left:676.3px;top:612px;font-size:13px;color:#2a2a2a;">る</span>
<span style="left:689.6px;top:612px;font-size:13px;color:#2a2a2a;">還</span>
<span style="left:702.9px;top:612px;font-size:13px;color:#2a2a2a;">付</span>
<span style="left:716.1px;top:612px;font-size:13px;color:#2a2a2a;">請</span>
<span style="left:729.4px;top:612px;font-size:13px;color:#2a2a2a;">求</span>
<span style="left:742.7px;top:612px;font-size:13px;color:#2a2a2a;">税</span>
<span style="left:756.0px;top:612px;font-size:13px;color:#2a2a2a;">額</span>
<span style="left:643px;top:527.5px;font-size:12.5px;color:#222;">こ</span>
<span style="left:643px;top:540.5px;font-size:12.5px;color:#222;">の</span>
<span style="left:643px;top:553.5px;font-size:12.5px;color:#222;">申</span>
<span style="left:643px;top:566.5px;font-size:12.5px;color:#222;">告</span>
<span style="left:643px;top:579.5px;font-size:12.5px;color:#222;">に</span>
<span style="left:643px;top:592.5px;font-size:12.5px;color:#222;">よ</span>
<span style="left:643px;top:605.5px;font-size:12.5px;color:#222;">る</span>
<span style="left:643px;top:618.5px;font-size:12.5px;color:#222;">還</span>
<div style="left:0px;top:626px;width:1300px;height:56px;background:#f0f0f0"></div>
<div style="left:0px;top:626px;width:1300px;height:1px;background:#f4f4f4"></div>
<div style="left:0px;top:627px;width:1300px;height:13px;background:#d4d4d4"></div>
<div style="left:0px;top:627px;width:1300px;height:1px;background:#404040"></div>
<div style="left:2px;top:628px;width:11px;height:11px;background:linear-gradient(#fafafa,#e4e4e4);border:1px solid #a8a8a8;border-top:none;border-radius:0 0 2px 2px"></div>
<svg style="position:absolute;left:2px;top:628px" width="11" height="11" viewBox="0 0 11 11"><path d="M3 2 V9 M9 2 L5 5.5 L9 9 Z" fill="none" stroke="#a0a0a0" stroke-width="1"/></svg>
<div style="left:14px;top:628px;width:11px;height:11px;background:linear-gradient(#fafafa,#e4e4e4);border:1px solid #a8a8a8;border-top:none;border-radius:0 0 2px 2px"></div>
<svg style="position:absolute;left:14px;top:628px" width="11" height="11" viewBox="0 0 11 11"><path d="M8 2 L4 5.5 L8 9 Z" fill="none" stroke="#a0a0a0" stroke-width="1"/></svg>
<div style="left:26px;top:628px;width:11px;height:11px;background:linear-gradient(#fafafa,#e4e4e4);border:1px solid #a8a8a8;border-top:none;border-radius:0 0 2px 2px"></div>
<svg style="position:absolute;left:26px;top:628px" width="11" height="11" viewBox="0 0 11 11"><path d="M4 2 L8 5.5 L4 9 Z" fill="none" stroke="#a0a0a0" stroke-width="1"/></svg>
<div style="left:38px;top:628px;width:11px;height:11px;background:linear-gradient(#fafafa,#e4e4e4);border:1px solid #a8a8a8;border-top:none;border-radius:0 0 2px 2px"></div>
<svg style="position:absolute;left:38px;top:628px" width="11" height="11" viewBox="0 0 11 11"><path d="M9 2 V9 M3 2 L7 5.5 L3 9 Z" fill="none" stroke="#a0a0a0" stroke-width="1"/></svg>
<div style="left:50px;top:628px;width:19px;height:11.5px;background:linear-gradient(#b8d4f0,#ffffff 45%,#f0f0f0);border:1px solid #8a8a8a;border-top:none;border-radius:0 0 2px 2px"></div>
<div style="left:57px;top:632px;width:6px;height:1.5px;background:#e02020"></div>
<div style="left:70px;top:628px;width:37px;height:11.5px;background:linear-gradient(#f6f6f6,#e2e2e2);border:1px solid #8a8a8a;border-top:none;border-radius:0 0 2px 2px"></div>
<span style="left:70px;top:629px;width:37px;text-align:center;font-size:8px;color:#222">一次集</span>
<div style="left:108px;top:628px;width:19px;height:11.5px;background:linear-gradient(#f6f6f6,#e2e2e2);border:1px solid #8a8a8a;border-top:none;border-radius:0 0 2px 2px"></div>
<span style="left:108px;top:629px;width:19px;text-align:center;font-size:8px;color:#222">二</span>
<div style="left:128px;top:628px;width:18px;height:11.5px;background:linear-gradient(#f6f6f6,#e2e2e2);border:1px solid #8a8a8a;border-top:none;border-radius:0 0 2px 2px"></div>
<span style="left:128px;top:629px;width:18px;text-align:center;font-size:8px;color:#222">四</span>
<div style="left:147px;top:628px;width:45px;height:11.5px;background:linear-gradient(#f6f6f6,#e2e2e2);border:1px solid #8a8a8a;border-top:none;border-radius:0 0 2px 2px"></div>
<span style="left:147px;top:629px;width:45px;text-align:center;font-size:8px;color:#222">四次集紙</span>
<div style="left:193px;top:628px;width:36px;height:11.5px;background:linear-gradient(#f6f6f6,#e2e2e2);border:1px solid #8a8a8a;border-top:none;border-radius:0 0 2px 2px"></div>
<span style="left:193px;top:629px;width:36px;text-align:center;font-size:8px;color:#222">五(一)</span>
<div style="left:230px;top:628px;width:35px;height:11.5px;background:linear-gradient(#f6f6f6,#e2e2e2);border:1px solid #8a8a8a;border-top:none;border-radius:0 0 2px 2px"></div>
<span style="left:230px;top:629px;width:35px;text-align:center;font-size:8px;color:#222">五(二)</span>
<div style="left:266px;top:628px;width:35px;height:11.5px;background:linear-gradient(#f6f6f6,#e2e2e2);border:1px solid #8a8a8a;border-top:none;border-radius:0 0 2px 2px"></div>
<span style="left:266px;top:629px;width:35px;text-align:center;font-size:8px;color:#222">六(一)</span>
<div style="left:302px;top:628px;width:35px;height:11.5px;background:linear-gradient(#f6f6f6,#e2e2e2);border:1px solid #8a8a8a;border-top:none;border-radius:0 0 2px 2px"></div>
<span style="left:302px;top:629px;width:35px;text-align:center;font-size:8px;color:#222">六(六)</span>
<div style="left:338px;top:628px;width:36px;height:11.5px;background:linear-gradient(#f6f6f6,#e2e2e2);border:1px solid #8a8a8a;border-top:none;border-radius:0 0 2px 2px"></div>
<span style="left:338px;top:629px;width:36px;text-align:center;font-size:8px;color:#222">六(十)</span>
<div style="left:375px;top:628px;width:44px;height:11.5px;background:linear-gradient(#f6f6f6,#e2e2e2);border:1px solid #8a8a8a;border-top:none;border-radius:0 0 2px 2px"></div>
<span style="left:375px;top:629px;width:44px;text-align:center;font-size:8px;color:#222">六(十一)</span>
<div style="left:420px;top:628px;width:43px;height:11.5px;background:linear-gradient(#f6f6f6,#e2e2e2);border:1px solid #8a8a8a;border-top:none;border-radius:0 0 2px 2px"></div>
<span style="left:420px;top:629px;width:43px;text-align:center;font-size:8px;color:#222">六(十五)</span>
<div style="left:464px;top:628px;width:36px;height:11.5px;background:linear-gradient(#f6f6f6,#e2e2e2);border:1px solid #8a8a8a;border-top:none;border-radius:0 0 2px 2px"></div>
<span style="left:464px;top:629px;width:36px;text-align:center;font-size:8px;color:#222">八(一)</span>
<div style="left:501px;top:628px;width:60px;height:11.5px;background:linear-gradient(#f6f6f6,#e2e2e2);border:1px solid #8a8a8a;border-top:none;border-radius:0 0 2px 2px"></div>
<span style="left:501px;top:629px;width:60px;text-align:center;font-size:8px;color:#222">十一(一の二)</span>
<div style="left:562px;top:628px;width:44px;height:11.5px;background:linear-gradient(#f6f6f6,#e2e2e2);border:1px solid #8a8a8a;border-top:none;border-radius:0 0 2px 2px"></div>
<span style="left:562px;top:629px;width:44px;text-align:center;font-size:8px;color:#222">十三(五)</span>
<div style="left:607px;top:628px;width:43px;height:11.5px;background:linear-gradient(#f6f6f6,#e2e2e2);border:1px solid #8a8a8a;border-top:none;border-radius:0 0 2px 2px"></div>
<span style="left:607px;top:629px;width:43px;text-align:center;font-size:8px;color:#222">十四(二)</span>
<div style="left:651px;top:628px;width:45px;height:11.5px;background:linear-gradient(#f6f6f6,#e2e2e2);border:1px solid #8a8a8a;border-top:none;border-radius:0 0 2px 2px"></div>
<span style="left:651px;top:629px;width:45px;text-align:center;font-size:8px;color:#222">十四(四)</span>
<div style="left:697px;top:628px;width:26px;height:11.5px;background:linear-gradient(#f6f6f6,#e2e2e2);border:1px solid #8a8a8a;border-top:none;border-radius:0 0 2px 2px"></div>
<span style="left:697px;top:629px;width:26px;text-align:center;font-size:8px;color:#222">十五</span>
<div style="left:724px;top:628px;width:44px;height:11.5px;background:linear-gradient(#f6f6f6,#e2e2e2);border:1px solid #8a8a8a;border-top:none;border-radius:0 0 2px 2px"></div>
<span style="left:724px;top:629px;width:44px;text-align:center;font-size:8px;color:#222">十六(一)</span>
<div style="left:769px;top:628px;width:44px;height:11.5px;background:linear-gradient(#f6f6f6,#e2e2e2);border:1px solid #8a8a8a;border-top:none;border-radius:0 0 2px 2px"></div>
<span style="left:769px;top:629px;width:44px;text-align:center;font-size:8px;color:#222">十六(二)</span>
<div style="left:814px;top:628px;width:44px;height:11.5px;background:linear-gradient(#f6f6f6,#e2e2e2);border:1px solid #8a8a8a;border-top:none;border-radius:0 0 2px 2px"></div>
<span style="left:814px;top:629px;width:44px;text-align:center;font-size:8px;color:#222">十六(七)</span>
<div style="left:859px;top:628px;width:43px;height:11.5px;background:linear-gradient(#f6f6f6,#e2e2e2);border:1px solid #8a8a8a;border-top:none;border-radius:0 0 2px 2px"></div>
<span style="left:859px;top:629px;width:43px;text-align:center;font-size:8px;color:#222">十六(八)</span>
<div style="left:903px;top:628px;width:44px;height:11.5px;background:linear-gradient(#f6f6f6,#e2e2e2);border:1px solid #8a8a8a;border-top:none;border-radius:0 0 2px 2px"></div>
<span style="left:903px;top:629px;width:44px;text-align:center;font-size:8px;color:#222">預貯金等</span>
<div style="left:948px;top:628px;width:43px;height:11.5px;background:linear-gradient(#f6f6f6,#e2e2e2);border:1px solid #8a8a8a;border-top:none;border-radius:0 0 2px 2px"></div>
<span style="left:948px;top:629px;width:43px;text-align:center;font-size:8px;color:#222">受取手形</span>
<div style="left:992px;top:628px;width:75px;height:11.5px;background:linear-gradient(#f6f6f6,#e2e2e2);border:1px solid #8a8a8a;border-top:none;border-radius:0 0 2px 2px"></div>
<span style="left:992px;top:629px;width:75px;text-align:center;font-size:8px;color:#222">売掛金(未収入金)</span>
<div style="left:1068px;top:628px;width:136px;height:11.5px;background:linear-gradient(#f6f6f6,#e2e2e2);border:1px solid #8a8a8a;border-top:none;border-radius:0 0 2px 2px"></div>
<span style="left:1068px;top:629px;width:136px;text-align:center;font-size:8px;color:#222">仮払金(前渡金)/貸付金・受取利息</span>
<div style="left:1205px;top:628px;width:41px;height:11.5px;background:linear-gradient(#f6f6f6,#e2e2e2);border:1px solid #8a8a8a;border-top:none;border-radius:0 0 2px 2px"></div>
<span style="left:1205px;top:629px;width:41px;text-align:center;font-size:8px;color:#222">棚卸資産</span>
<div style="left:1247px;top:628px;width:48px;height:11.5px;background:linear-gradient(#f6f6f6,#e2e2e2);border:1px solid #8a8a8a;border-top:none;border-radius:0 0 2px 2px"></div>
<span style="left:1247px;top:629px;width:48px;text-align:center;font-size:8px;color:#222">有価証券</span>
<div style="left:0px;top:640px;width:1300px;height:2px;background:#e8e8e8"></div>
<div style="left:3px;top:644px;width:46px;height:24px;background:linear-gradient(#fdfdfd 0 48%,#f3f3f3 52%);border:1px solid #b4b4b4;border-radius:3px"></div>
<span style="left:3px;top:645.5px;width:38px;text-align:right;font-size:8.8px;color:#4a6e9e">ESC</span>
<span style="left:3px;top:657px;width:46px;text-align:center;font-size:8.5px;color:#222">業務ﾒﾆｭｰ</span>
<div style="left:54px;top:644px;width:46px;height:24px;background:linear-gradient(#fdfdfd 0 48%,#f3f3f3 52%);border:1px solid #b4b4b4;border-radius:3px"></div>
<span style="left:54px;top:645.5px;width:38px;text-align:right;font-size:8.8px;color:#4a6e9e">F1</span>
<span style="left:54px;top:657px;width:46px;text-align:center;font-size:8.5px;color:#222">ヘルプ</span>
<div style="left:102px;top:644px;width:46px;height:24px;background:linear-gradient(#fdfdfd 0 48%,#f3f3f3 52%);border:1px solid #b4b4b4;border-radius:3px"></div>
<span style="left:102px;top:645.5px;width:38px;text-align:right;font-size:8.8px;color:#4a6e9e">F2</span>
<div style="left:150px;top:644px;width:46px;height:24px;background:linear-gradient(#fdfdfd 0 48%,#f3f3f3 52%);border:1px solid #b4b4b4;border-radius:3px"></div>
<span style="left:150px;top:645.5px;width:38px;text-align:right;font-size:8.8px;color:#4a6e9e">F3</span>
<div style="left:198px;top:644px;width:47px;height:24px;background:linear-gradient(#fdfdfd 0 48%,#f3f3f3 52%);border:1px solid #b4b4b4;border-radius:3px"></div>
<span style="left:198px;top:645.5px;width:39px;text-align:right;font-size:8.8px;color:#4a6e9e">F4</span>
<div style="left:250px;top:644px;width:47px;height:24px;background:linear-gradient(#fdfdfd 0 48%,#f3f3f3 52%);border:1px solid #b4b4b4;border-radius:3px"></div>
<span style="left:250px;top:645.5px;width:39px;text-align:right;font-size:8.8px;color:#4a6e9e">F5</span>
<span style="left:250px;top:657px;width:47px;text-align:center;font-size:8.5px;color:#222">機能ﾒﾆｭｰ</span>
<div style="left:298px;top:644px;width:46px;height:24px;background:linear-gradient(#fdfdfd 0 48%,#f3f3f3 52%);border:1px solid #b4b4b4;border-radius:3px"></div>
<span style="left:298px;top:645.5px;width:38px;text-align:right;font-size:8.8px;color:#4a6e9e">F6</span>
<div style="left:346px;top:644px;width:47px;height:24px;background:linear-gradient(#fdfdfd 0 48%,#f3f3f3 52%);border:1px solid #b4b4b4;border-radius:3px"></div>
<span style="left:346px;top:645.5px;width:39px;text-align:right;font-size:8.8px;color:#4a6e9e">F7</span>
<div style="left:394px;top:644px;width:47px;height:24px;background:linear-gradient(#fdfdfd 0 48%,#f3f3f3 52%);border:1px solid #b4b4b4;border-radius:3px"></div>
<span style="left:394px;top:645.5px;width:39px;text-align:right;font-size:8.8px;color:#4a6e9e">F8</span>
<div style="left:445px;top:644px;width:47px;height:24px;background:linear-gradient(#fdfdfd 0 48%,#f3f3f3 52%);border:1px solid #b4b4b4;border-radius:3px"></div>
<span style="left:445px;top:645.5px;width:39px;text-align:right;font-size:8.8px;color:#4a6e9e">F9</span>
<span style="left:445px;top:657px;width:47px;text-align:center;font-size:8.5px;color:#222">エラー詳細</span>
<div style="left:493px;top:644px;width:47px;height:24px;background:linear-gradient(#fdfdfd 0 48%,#f3f3f3 52%);border:1px solid #b4b4b4;border-radius:3px"></div>
<span style="left:493px;top:645.5px;width:39px;text-align:right;font-size:8.8px;color:#4a6e9e">F10</span>
<div style="left:542px;top:644px;width:47px;height:24px;background:linear-gradient(#fdfdfd 0 48%,#f3f3f3 52%);border:1px solid #b4b4b4;border-radius:3px"></div>
<span style="left:542px;top:645.5px;width:39px;text-align:right;font-size:8.8px;color:#4a6e9e">F11</span>
<div style="left:590px;top:644px;width:46px;height:24px;background:linear-gradient(#fdfdfd 0 48%,#f3f3f3 52%);border:1px solid #b4b4b4;border-radius:3px"></div>
<span style="left:590px;top:645.5px;width:38px;text-align:right;font-size:8.8px;color:#4a6e9e">F12</span>
<div style="left:640px;top:644px;width:48px;height:24px;background:linear-gradient(#fdfdfd 0 48%,#f3f3f3 52%);border:1px solid #b4b4b4;border-radius:3px"></div>
<span style="left:651px;top:645.5px;font-size:8.8px;color:#4a6e9e">Ctrl+</span>
<svg style="position:absolute;left:673px;top:645px" width="8" height="9"><rect x="0.5" y="1.5" width="6" height="6.5" rx="1" fill="#fff" stroke="#777"/><path d="M2 5 L3.5 6.5 L7 1" stroke="#1a2a9a" stroke-width="1.3" fill="none"/></svg>
<div style="left:1095px;top:669px;width:1px;height:13px;background:#dcdcdc"></div>
<div style="left:1168px;top:669px;width:1px;height:13px;background:#dcdcdc"></div>
<div style="left:1241px;top:669px;width:1px;height:13px;background:#dcdcdc"></div>
<div style="left:1255px;top:669px;width:1px;height:13px;background:#dcdcdc"></div>
<div style="left:1275px;top:669px;width:1px;height:13px;background:#dcdcdc"></div>
<div style="left:0px;top:669px;width:1300px;height:1px;background:#dcdcdc"></div>
<div style="left:0px;top:641px;width:1300px;height:1px;background:#dadada"></div>
</body></html>
